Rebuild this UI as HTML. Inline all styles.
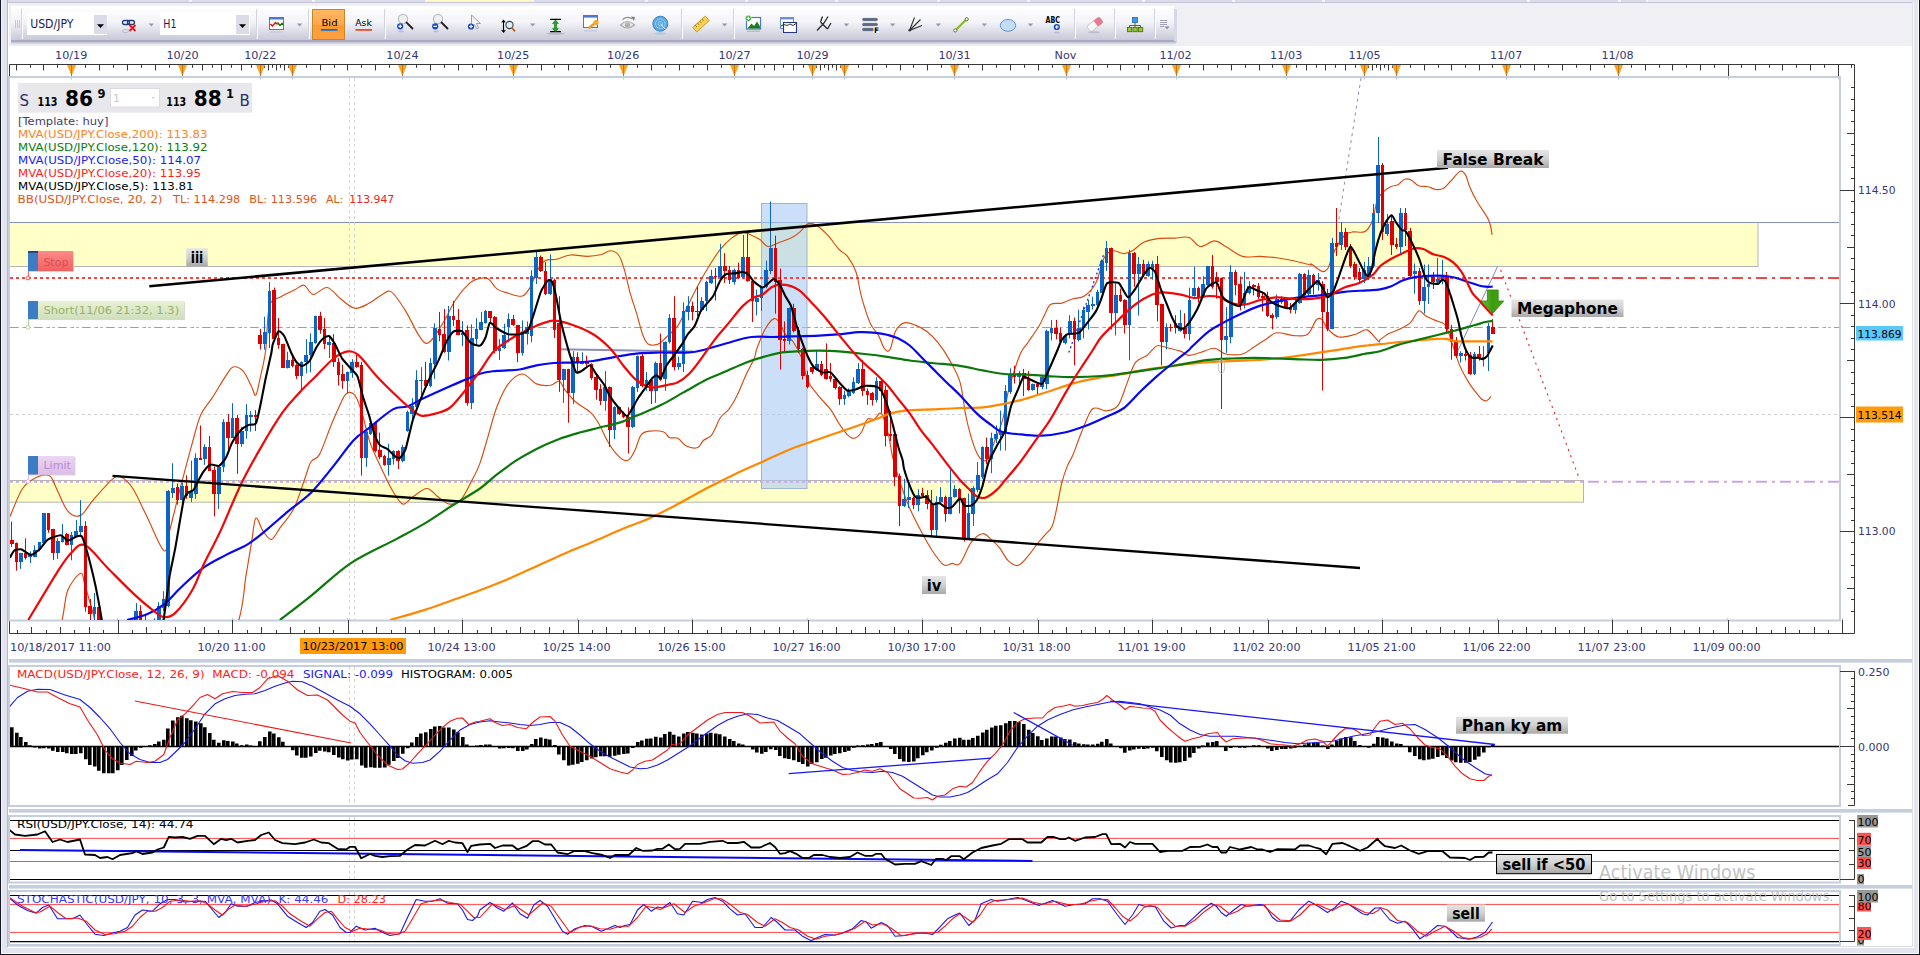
<!DOCTYPE html>
<html><head><meta charset="utf-8"><title>USD/JPY H1</title>
<style>
html,body{margin:0;padding:0;background:#fff;overflow:hidden}
body{width:1920px;height:955px;position:relative;font-family:'DejaVu Sans','Liberation Sans',sans-serif}
svg{position:absolute;left:0;top:0;display:block}
text{font-family:'DejaVu Sans','Liberation Sans',sans-serif}
.ax{font-size:11px;fill:#36367a}
.lb{font-family:'DejaVu Sans','Liberation Sans',sans-serif;font-weight:bold;fill:#000}
</style></head><body>
<svg width="1920" height="955" viewBox="0 0 1920 955">
<defs>
<linearGradient id="tb" x1="0" y1="0" x2="0" y2="1"><stop offset="0" stop-color="#ffffff"/><stop offset="0.45" stop-color="#f4f4f9"/><stop offset="1" stop-color="#c6c6d6"/></linearGradient>
<linearGradient id="bid" x1="0" y1="0" x2="0" y2="1"><stop offset="0" stop-color="#ffb864"/><stop offset="0.5" stop-color="#ffa848"/><stop offset="0.51" stop-color="#ff9a32"/><stop offset="1" stop-color="#ffa040"/></linearGradient>
<linearGradient id="lbl" x1="0" y1="0" x2="0" y2="1"><stop offset="0" stop-color="#e6e6e6"/><stop offset="0.5" stop-color="#d0d0d0"/><stop offset="1" stop-color="#a8a8a8"/></linearGradient>
<linearGradient id="shadow" x1="0" y1="0" x2="0" y2="1"><stop offset="0" stop-color="#9c9cb4"/><stop offset="1" stop-color="#efeff4" stop-opacity="0"/></linearGradient>
<linearGradient id="garrow" x1="0" y1="0" x2="1" y2="0"><stop offset="0" stop-color="#6cc02c"/><stop offset="0.5" stop-color="#3c9a10"/><stop offset="1" stop-color="#4aa818"/></linearGradient>
<clipPath id="cm"><rect x="10" y="78" width="1829" height="542"/></clipPath>
<clipPath id="cmacd"><rect x="10" y="667" width="1829" height="139"/></clipPath>
<clipPath id="crsi"><rect x="10" y="817" width="1829" height="65"/></clipPath>
<clipPath id="csto"><rect x="10" y="892" width="1829" height="52"/></clipPath>
</defs><rect x="0" y="0" width="1920" height="955" fill="#e4e4ee"/><rect x="8" y="3" width="1904" height="43" fill="#efeff4"/><rect x="8" y="46" width="1904" height="900" fill="#ffffff"/><rect x="8" y="0" width="1904" height="2" fill="#dcdce8"/><rect x="8" y="2" width="1904" height="1" fill="#c4c4d8"/><rect x="427" y="0" width="104" height="2" fill="#fff6c0"/><rect x="189" y="0" width="3" height="2" fill="#f4f4fa"/><rect x="312" y="0" width="3" height="2" fill="#f4f4fa"/><rect x="425" y="0" width="3" height="2" fill="#f4f4fa"/><rect x="531" y="0" width="3" height="2" fill="#f4f4fa"/><rect x="645" y="0" width="3" height="2" fill="#f4f4fa"/><rect x="745" y="0" width="3" height="2" fill="#f4f4fa"/><rect x="835" y="0" width="3" height="2" fill="#f4f4fa"/><rect x="937" y="0" width="3" height="2" fill="#f4f4fa"/><rect x="1027" y="0" width="3" height="2" fill="#f4f4fa"/><rect x="1142" y="0" width="3" height="2" fill="#f4f4fa"/><rect x="1232" y="0" width="3" height="2" fill="#f4f4fa"/><rect x="1322" y="0" width="3" height="2" fill="#f4f4fa"/><rect x="1527" y="0" width="3" height="2" fill="#f4f4fa"/><rect x="1618" y="0" width="3" height="2" fill="#f4f4fa"/><rect x="1646" y="0" width="3" height="2" fill="#f4f4fa"/><rect x="1648" y="0" width="264" height="2" fill="#e8e8f2"/><rect x="0" y="0" width="1" height="955" fill="#14182a"/><rect x="1" y="0" width="1" height="955" fill="#f4f4fa"/><rect x="7" y="0" width="1" height="947" fill="#b8b8cc"/><rect x="8" y="3" width="1" height="943" fill="#ffffff"/><rect x="1912" y="3" width="1" height="944" fill="#dcdcea"/><rect x="1913" y="3" width="1" height="945" fill="#ffffff"/><rect x="1918" y="0" width="1" height="954" fill="#ffffff"/><rect x="1919" y="0" width="1" height="955" fill="#14182a"/><rect x="8" y="946" width="1905" height="1" fill="#dcdcea"/><rect x="8" y="947" width="1906" height="1" fill="#ffffff"/><rect x="1" y="953" width="1918" height="1" fill="#ffffff"/><rect x="0" y="954" width="1920" height="1" fill="#14182a"/><rect x="11" y="41" width="1165" height="5" fill="url(#shadow)"/><rect x="1174" y="9" width="3" height="34" fill="#c8c8d8" opacity="0.6"/><rect x="11" y="6" width="1163" height="35" fill="url(#tb)"/><rect x="11" y="40" width="1163" height="1" fill="#a8a8c0"/><line x1="15.5" y1="20" x2="15.5" y2="28" stroke="#c4c4d6" stroke-width="1"/><line x1="17.5" y1="20" x2="17.5" y2="28" stroke="#c4c4d6" stroke-width="1"/><line x1="19.5" y1="20" x2="19.5" y2="28" stroke="#c4c4d6" stroke-width="1"/><rect x="21" y="9" width="1" height="30" fill="#d2d2e0"/><rect x="22" y="9" width="1" height="30" fill="#fafaff"/><rect x="256" y="9" width="1" height="30" fill="#d2d2e0"/><rect x="257" y="9" width="1" height="30" fill="#fafaff"/><rect x="308" y="9" width="1" height="30" fill="#d2d2e0"/><rect x="309" y="9" width="1" height="30" fill="#fafaff"/><rect x="384" y="9" width="1" height="30" fill="#d2d2e0"/><rect x="385" y="9" width="1" height="30" fill="#fafaff"/><rect x="681" y="9" width="1" height="30" fill="#d2d2e0"/><rect x="682" y="9" width="1" height="30" fill="#fafaff"/><rect x="733" y="9" width="1" height="30" fill="#d2d2e0"/><rect x="734" y="9" width="1" height="30" fill="#fafaff"/><rect x="1074" y="9" width="1" height="30" fill="#d2d2e0"/><rect x="1075" y="9" width="1" height="30" fill="#fafaff"/><rect x="1114" y="9" width="1" height="30" fill="#d2d2e0"/><rect x="1115" y="9" width="1" height="30" fill="#fafaff"/><rect x="1154" y="9" width="1" height="30" fill="#d2d2e0"/><rect x="1155" y="9" width="1" height="30" fill="#fafaff"/><path d="M148.6,23.5 h5.4 l-2.7,3 z" fill="#9898b0"/><path d="M296.9,23.5 h5.4 l-2.7,3 z" fill="#9898b0"/><path d="M530,23.5 h5.4 l-2.7,3 z" fill="#9898b0"/><path d="M721.9,23.5 h5.4 l-2.7,3 z" fill="#9898b0"/><path d="M843.75,23.5 h5.4 l-2.7,3 z" fill="#9898b0"/><path d="M890,23.5 h5.4 l-2.7,3 z" fill="#9898b0"/><path d="M935.6,23.5 h5.4 l-2.7,3 z" fill="#9898b0"/><path d="M981.7,23.5 h5.4 l-2.7,3 z" fill="#9898b0"/><path d="M1027.8,23.5 h5.4 l-2.7,3 z" fill="#9898b0"/><rect x="27" y="12" width="80" height="23" fill="#ffffff"/><rect x="94" y="15" width="13" height="19" fill="#dcdce8"/><path d="M97,24.3 h7 l-3.5,3.8 z" fill="#000"/><text x="30.2" y="27.9" font-size="11.9px" fill="#1a1a50" font-family="'Liberation Sans',sans-serif" textLength="43.2" lengthAdjust="spacingAndGlyphs">USD/JPY</text><g fill="none" stroke="#1c3c78" stroke-width="1.3"><rect x="122.5" y="20.5" width="7" height="4" rx="2"/><rect x="127.5" y="20.5" width="7" height="4" rx="2"/></g><path d="M129.5,25 l6,6 M135.5,25 l-6,6" stroke="#e81010" stroke-width="1.8"/><g fill="none" stroke="#b0b4c8" stroke-width="1" opacity="0.7"><rect x="122.5" y="29.5" width="6" height="3" rx="1.5"/></g><rect x="160" y="12" width="90" height="23" fill="#ffffff"/><rect x="236" y="15" width="13" height="19" fill="#dcdce8"/><path d="M239,24.3 h7 l-3.5,3.8 z" fill="#000"/><text x="163.3" y="27.9" font-size="11.9px" fill="#1a1a50" font-family="'Liberation Sans',sans-serif" textLength="13.2" lengthAdjust="spacingAndGlyphs">H1</text><rect x="269.5" y="17.5" width="14" height="12" fill="#fff" stroke="#4a78d0" stroke-width="1"/><rect x="269" y="17" width="15" height="2.5" fill="#4a78d0"/><path d="M270.5,24 l2,2 l3,-3.5 l2,2" fill="none" stroke="#e01010" stroke-width="1.5"/><path d="M277.5,22.5 l2.5,3 l2,-2 l1,1.5" fill="none" stroke="#107010" stroke-width="1.5"/><rect x="270" y="31" width="13" height="2" fill="#c8c8d8" opacity="0.7"/><rect x="312.5" y="9.5" width="32" height="30" fill="url(#bid)" stroke="#c08828" stroke-width="1"/><text x="321.5" y="25.8" font-size="9.5px" fill="#000" font-family="'DejaVu Sans Mono','Liberation Mono',monospace" textLength="16" lengthAdjust="spacingAndGlyphs">Bid</text><rect x="321" y="29" width="16.5" height="1.8" fill="#1070e0"/><text x="355.3" y="25.8" font-size="9.5px" fill="#000" font-family="'DejaVu Sans Mono','Liberation Mono',monospace" textLength="16.5" lengthAdjust="spacingAndGlyphs">Ask</text><rect x="355.5" y="29" width="16.5" height="1.8" fill="#f04820"/><circle cx="403" cy="19" r="4.6" fill="#eef0f4" stroke="#b8bcc4" stroke-width="1.2"/><path d="M406.5,22.5 l6,6" stroke="#202020" stroke-width="1.8" stroke-linecap="round"/><circle cx="400.2" cy="26.3" r="3.1" fill="#1848c0"/><path d="M398.4,26.3 h3.6" stroke="#fff" stroke-width="1.2"/><path d="M400.2,24.5 v3.6" stroke="#fff" stroke-width="1.2"/><ellipse cx="401" cy="31.5" rx="3" ry="1" fill="#a0a8d8" opacity="0.6"/><circle cx="438" cy="19" r="4.6" fill="#eef0f4" stroke="#b8bcc4" stroke-width="1.2"/><path d="M441.5,22.5 l6,6" stroke="#202020" stroke-width="1.8" stroke-linecap="round"/><circle cx="435.2" cy="26.3" r="3.1" fill="#1848c0"/><path d="M433.4,26.3 h3.6" stroke="#fff" stroke-width="1.2"/><ellipse cx="436" cy="31.5" rx="3" ry="1" fill="#a0a8d8" opacity="0.6"/><path d="M471.5,15 l0,12 l3,-2.5 l2,4.5 l2,-1 l-2,-4.5 l4,0 z" fill="#f4f4f4" stroke="#a0a0a8" stroke-width="1"/><circle cx="471" cy="26.5" r="3.1" fill="#1848c0"/><path d="M469.2,26.5 h3.6 M471,24.7 v3.6" stroke="#fff" stroke-width="1.2"/><path d="M503.5,20.5 v11.5 M501.7,22.5 l1.8,-2.2 l1.8,2.2 M501.7,30 l1.8,2.2 l1.8,-2.2" stroke="#000" stroke-width="1.1" fill="none"/><circle cx="509.5" cy="25" r="3.6" fill="#d8f0fa" stroke="#404040" stroke-width="1.1"/><path d="M512,28 l3,3.3" stroke="#c06010" stroke-width="1.8"/><path d="M550,19.3 h11 M550,31.7 h11" stroke="#000" stroke-width="1.3"/><path d="M555.5,20 l-3,3.6 h2 v4.8 h-2 l3,3.6 l3,-3.6 h-2 v-4.8 h2 z" fill="#28a028" stroke="#107010" stroke-width="0.6"/><ellipse cx="555.5" cy="33.5" rx="9" ry="1.2" fill="#9090a0" opacity="0.5"/><rect x="583.5" y="15.5" width="14" height="12" fill="#fff" stroke="#4a78d0" stroke-width="1"/><rect x="583" y="15" width="15" height="2.6" fill="#4a78d0"/><path d="M589.5,27.5 l5,-4" stroke="#f09820" stroke-width="2.6" stroke-linecap="round"/><circle cx="596" cy="22.5" r="2.6" fill="#f8a828"/><rect x="584" y="30" width="13" height="1.5" fill="#a8b8e0" opacity="0.5"/><path d="M620.5,25 q7,-7 14,0 q-7,6 -14,0 z" fill="#e8e8e8" stroke="#a8a8a8" stroke-width="1.1"/><circle cx="627.5" cy="25" r="2.6" fill="#b0b0b0"/><path d="M622.5,19.5 q5,-4 10,-0.5" fill="none" stroke="#909090" stroke-width="1.2"/><path d="M631,16.5 l4,0.5 l-1,4 z" fill="#808080"/><circle cx="660.3" cy="23.7" r="7.5" fill="#58a8e0" stroke="#3888c8" stroke-width="1"/><circle cx="660.3" cy="23.7" r="4.8" fill="none" stroke="#a8d4f4" stroke-width="0.8"/><circle cx="660.3" cy="23.7" r="2.2" fill="none" stroke="#a8d4f4" stroke-width="0.8"/><path d="M660.3,23.7 l5,5.5" stroke="#d8ecfc" stroke-width="1"/><ellipse cx="660.3" cy="33.5" rx="6" ry="1.2" fill="#88b8e0" opacity="0.5"/><g transform="translate(701,24) rotate(-42)"><rect x="-8.5" y="-3" width="17" height="6" fill="#f8d058" stroke="#c89820" stroke-width="0.9"/><path d="M-5,-3 v2.5 M-2,-3 v2.5 M1,-3 v2.5 M4,-3 v2.5" stroke="#806010" stroke-width="0.7"/></g><rect x="746.5" y="17.5" width="14" height="11.5" fill="#fff" stroke="#4a78d0" stroke-width="1.2"/><path d="M747.5,28.5 l4,-5 l2.5,2.5 l3,-4.5 l3,5 v2 z" fill="#1c7c1c"/><circle cx="748.3" cy="18.3" r="3.1" fill="#38a838" stroke="#fff" stroke-width="0.6"/><path d="M746.5,18.3 h3.6 M748.3,16.5 v3.6" stroke="#fff" stroke-width="1.1"/><rect x="747" y="30.5" width="13" height="1.5" fill="#80b080" opacity="0.5"/><rect x="780.5" y="17.5" width="13" height="11" fill="#fff" stroke="#6890d8" stroke-width="1"/><rect x="780" y="17" width="14" height="2.4" fill="#6890d8"/><rect x="783.5" y="22.5" width="13" height="10" fill="#fff" stroke="#283878" stroke-width="1.1"/><path d="M781,26 l3,-1.5 l3,1 l3,-1.5 l3,1.5 l3,-2" fill="none" stroke="#202020" stroke-width="0.9"/><path d="M817,30.5 l7,-7.5 M820.5,22 l7,7 M822.5,16.5 l-2,5.5 M824,23 l4,-6.5 M827.5,29 l3.5,-6" stroke="#282828" stroke-width="1.3" fill="none"/><rect x="862.5" y="18.3" width="15" height="2.4" rx="1.2" fill="#5c6880" stroke="#384258" stroke-width="0.4"/><rect x="862.5" y="23.3" width="15" height="2.4" rx="1.2" fill="#5c6880" stroke="#384258" stroke-width="0.4"/><rect x="862.5" y="28.3" width="15" height="2.4" rx="1.2" fill="#5c6880" stroke="#384258" stroke-width="0.4"/><rect x="873.5" y="26.5" width="5.5" height="6.5" fill="#fff"/><text x="874" y="32.6" font-size="7.5px" font-weight="bold" fill="#000" font-family="'Liberation Sans',sans-serif">F</text><path d="M909.5,30.5 l5,-13 M909.5,30.5 l11,-11 M909.5,30.5 l12.5,-5" stroke="#303030" stroke-width="1.1" fill="none"/><circle cx="909.7" cy="30.3" r="1.3" fill="#303030"/><path d="M955.5,30.3 l11,-11" stroke="#88b828" stroke-width="2.2"/><circle cx="955.3" cy="30.4" r="1.6" fill="#fff" stroke="#507010" stroke-width="0.9"/><circle cx="966.7" cy="19.2" r="1.6" fill="#fff" stroke="#507010" stroke-width="0.9"/><ellipse cx="1008" cy="25.4" rx="7.7" ry="5.9" fill="#c4dcf4" stroke="#6494d4" stroke-width="1"/><text x="1045.5" y="23" font-size="8.3px" font-weight="bold" fill="#000" font-family="'DejaVu Sans Mono','Liberation Mono',monospace" textLength="14.5" lengthAdjust="spacingAndGlyphs">ABC</text><circle cx="1056.8" cy="27" r="3.1" fill="#1848c0"/><path d="M1055,27 h3.6 M1056.8,25.2 v3.6" stroke="#fff" stroke-width="1.2"/><ellipse cx="1056.8" cy="32.5" rx="3" ry="1" fill="#a0a8d8" opacity="0.6"/><g transform="translate(1095,24.3) rotate(-38)"><rect x="-8" y="-3.6" width="16" height="7.2" rx="2" fill="#f8f8f8" stroke="#c0c0c8" stroke-width="0.8"/><path d="M1,-3.6 h5 a2,2 0 0 1 2,2 v3.2 a2,2 0 0 1 -2,2 h-5 z" fill="#ec7890"/></g><ellipse cx="1094" cy="32.3" rx="6" ry="1" fill="#a0a0b0" opacity="0.5"/><rect x="1132.5" y="17.5" width="5" height="5" fill="#3898f0" stroke="#1868c0" stroke-width="0.8"/><path d="M1135,22.5 v3 M1129.5,28 v-2.5 h11 v2.5 M1135,25.5 v2.5" stroke="#507010" stroke-width="1" fill="none"/><rect x="1127.5" y="27.5" width="4.2" height="4.2" fill="#98c838" stroke="#507010" stroke-width="0.9"/><rect x="1133" y="27.5" width="4.2" height="4.2" fill="#98c838" stroke="#507010" stroke-width="0.9"/><rect x="1138.5" y="27.5" width="4.2" height="4.2" fill="#98c838" stroke="#507010" stroke-width="0.9"/><path d="M1160,20.5 h7 M1160,22.5 h7 M1160,24.5 h7 M1160,26.5 h4" stroke="#9898b0" stroke-width="0.9"/><path d="M1164.5,26.5 h5 l-2.5,2.8 z" fill="#8888a0"/><path d="M9.5,77 V64.5 H1854.5 V633.5 H9.5 V620" fill="none" stroke="#383838" stroke-width="1"/><path d="M57.5,64.5V67.8M43.5,64.5V70.5M30.5,64.5V67.8M16.5,64.5V70.5M85.5,64.5V67.8M99.5,64.5V70.5M113.5,64.5V67.8M127.5,64.5V70.5M141.5,64.5V67.8M155.5,64.5V70.5M169.5,64.5V67.8M192.5,64.5V67.8M202.5,64.5V70.5M212.5,64.5V67.8M221.5,64.5V70.5M231.5,64.5V67.8M241.5,64.5V70.5M251.5,64.5V67.8M264.5,64.5V67.8M268.5,64.5V70.5M272.5,64.5V67.8M276.5,64.5V70.5M280.5,64.5V67.8M284.5,64.5V70.5M288.5,64.5V67.8M306.5,64.5V67.8M320.5,64.5V70.5M334.5,64.5V67.8M347.5,64.5V70.5M361.5,64.5V67.8M375.5,64.5V70.5M389.5,64.5V67.8M416.5,64.5V67.8M430.5,64.5V70.5M444.5,64.5V67.8M458.5,64.5V70.5M472.5,64.5V67.8M486.5,64.5V70.5M499.5,64.5V67.8M527.5,64.5V67.8M541.5,64.5V70.5M554.5,64.5V67.8M568.5,64.5V70.5M582.5,64.5V67.8M596.5,64.5V70.5M610.5,64.5V67.8M637.5,64.5V67.8M651.5,64.5V70.5M665.5,64.5V67.8M679.5,64.5V70.5M693.5,64.5V67.8M707.5,64.5V70.5M721.5,64.5V67.8M744.5,64.5V67.8M754.5,64.5V70.5M764.5,64.5V67.8M774.5,64.5V70.5M783.5,64.5V67.8M793.5,64.5V70.5M803.5,64.5V67.8M816.5,64.5V67.8M820.5,64.5V70.5M824.5,64.5V67.8M828.5,64.5V70.5M832.5,64.5V67.8M836.5,64.5V70.5M840.5,64.5V67.8M858.5,64.5V67.8M872.5,64.5V70.5M886.5,64.5V67.8M900.5,64.5V70.5M913.5,64.5V67.8M927.5,64.5V70.5M941.5,64.5V67.8M968.5,64.5V67.8M982.5,64.5V70.5M996.5,64.5V67.8M1010.5,64.5V70.5M1024.5,64.5V67.8M1038.5,64.5V70.5M1052.5,64.5V67.8M1079.5,64.5V67.8M1093.5,64.5V70.5M1107.5,64.5V67.8M1120.5,64.5V70.5M1134.5,64.5V67.8M1148.5,64.5V70.5M1162.5,64.5V67.8M1189.5,64.5V67.8M1203.5,64.5V70.5M1217.5,64.5V67.8M1231.5,64.5V70.5M1245.5,64.5V67.8M1259.5,64.5V70.5M1272.5,64.5V67.8M1296.5,64.5V67.8M1306.5,64.5V70.5M1316.5,64.5V67.8M1325.5,64.5V70.5M1335.5,64.5V67.8M1345.5,64.5V70.5M1355.5,64.5V67.8M1368.5,64.5V67.8M1372.5,64.5V70.5M1376.5,64.5V67.8M1380.5,64.5V70.5M1384.5,64.5V67.8M1388.5,64.5V70.5M1392.5,64.5V67.8M1410.5,64.5V67.8M1424.5,64.5V70.5M1438.5,64.5V67.8M1451.5,64.5V70.5M1465.5,64.5V67.8M1479.5,64.5V70.5M1492.5,64.5V67.8M1520.5,64.5V67.8M1534.5,64.5V70.5M1548.5,64.5V67.8M1562.5,64.5V70.5M1576.5,64.5V67.8M1590.5,64.5V70.5M1604.5,64.5V67.8M1631.5,64.5V67.8M1645.5,64.5V70.5M1659.5,64.5V67.8M1672.5,64.5V70.5M1686.5,64.5V67.8M1700.5,64.5V70.5M1714.5,64.5V67.8M1741.5,64.5V67.8M1755.5,64.5V70.5M1769.5,64.5V67.8M1782.5,64.5V70.5M1796.5,64.5V67.8M1810.5,64.5V70.5M1824.5,64.5V67.8M1851.5,64.5V67.8M71.5,64.5V77M182.5,64.5V77M260.5,64.5V77M292.5,64.5V77M402.5,64.5V77M513.5,64.5V77M623.5,64.5V77M734.5,64.5V77M812.5,64.5V77M844.5,64.5V77M954.5,64.5V77M1066.5,64.5V77M1176.5,64.5V77M1286.5,64.5V77M1364.5,64.5V77M1396.5,64.5V77M1506.5,64.5V77M1618.5,64.5V77M1728.5,64.5V77M1838.5,64.5V77" stroke="#383838" stroke-width="1" fill="none"/><path d="M67.0,65 h9 l-4.5,11 z" fill="#ffa318"/><path d="M71.5,65V77" stroke="#c87808" stroke-width="1"/><path d="M178.0,65 h9 l-4.5,11 z" fill="#ffa318"/><path d="M182.5,65V77" stroke="#c87808" stroke-width="1"/><path d="M256.0,65 h9 l-4.5,11 z" fill="#ffa318"/><path d="M260.5,65V77" stroke="#c87808" stroke-width="1"/><path d="M288.0,65 h9 l-4.5,11 z" fill="#ffa318"/><path d="M292.5,65V77" stroke="#c87808" stroke-width="1"/><path d="M398.0,65 h9 l-4.5,11 z" fill="#ffa318"/><path d="M402.5,65V77" stroke="#c87808" stroke-width="1"/><path d="M509.0,65 h9 l-4.5,11 z" fill="#ffa318"/><path d="M513.5,65V77" stroke="#c87808" stroke-width="1"/><path d="M619.0,65 h9 l-4.5,11 z" fill="#ffa318"/><path d="M623.5,65V77" stroke="#c87808" stroke-width="1"/><path d="M730.0,65 h9 l-4.5,11 z" fill="#ffa318"/><path d="M734.5,65V77" stroke="#c87808" stroke-width="1"/><path d="M808.0,65 h9 l-4.5,11 z" fill="#ffa318"/><path d="M812.5,65V77" stroke="#c87808" stroke-width="1"/><path d="M840.0,65 h9 l-4.5,11 z" fill="#ffa318"/><path d="M844.5,65V77" stroke="#c87808" stroke-width="1"/><path d="M950.0,65 h9 l-4.5,11 z" fill="#ffa318"/><path d="M954.5,65V77" stroke="#c87808" stroke-width="1"/><path d="M1062.0,65 h9 l-4.5,11 z" fill="#ffa318"/><path d="M1066.5,65V77" stroke="#c87808" stroke-width="1"/><path d="M1172.0,65 h9 l-4.5,11 z" fill="#ffa318"/><path d="M1176.5,65V77" stroke="#c87808" stroke-width="1"/><path d="M1282.0,65 h9 l-4.5,11 z" fill="#ffa318"/><path d="M1286.5,65V77" stroke="#c87808" stroke-width="1"/><path d="M1360.0,65 h9 l-4.5,11 z" fill="#ffa318"/><path d="M1364.5,65V77" stroke="#c87808" stroke-width="1"/><path d="M1392.0,65 h9 l-4.5,11 z" fill="#ffa318"/><path d="M1396.5,65V77" stroke="#c87808" stroke-width="1"/><path d="M1502.0,65 h9 l-4.5,11 z" fill="#ffa318"/><path d="M1506.5,65V77" stroke="#c87808" stroke-width="1"/><path d="M1614.0,65 h9 l-4.5,11 z" fill="#ffa318"/><path d="M1618.5,65V77" stroke="#c87808" stroke-width="1"/><text x="71.2" y="59" text-anchor="middle" font-size="11.2px" fill="#36367a">10/19</text><text x="182.5" y="59" text-anchor="middle" font-size="11.2px" fill="#36367a">10/20</text><text x="260.3" y="59" text-anchor="middle" font-size="11.2px" fill="#36367a">10/22</text><text x="402.4" y="59" text-anchor="middle" font-size="11.2px" fill="#36367a">10/24</text><text x="513.2" y="59" text-anchor="middle" font-size="11.2px" fill="#36367a">10/25</text><text x="623.2" y="59" text-anchor="middle" font-size="11.2px" fill="#36367a">10/26</text><text x="734.5" y="59" text-anchor="middle" font-size="11.2px" fill="#36367a">10/27</text><text x="812.5" y="59" text-anchor="middle" font-size="11.2px" fill="#36367a">10/29</text><text x="954.5" y="59" text-anchor="middle" font-size="11.2px" fill="#36367a">10/31</text><text x="1065.5" y="59" text-anchor="middle" font-size="11.2px" fill="#36367a">Nov</text><text x="1175.5" y="59" text-anchor="middle" font-size="11.2px" fill="#36367a">11/02</text><text x="1286.2" y="59" text-anchor="middle" font-size="11.2px" fill="#36367a">11/03</text><text x="1364.5" y="59" text-anchor="middle" font-size="11.2px" fill="#36367a">11/05</text><text x="1506.2" y="59" text-anchor="middle" font-size="11.2px" fill="#36367a">11/07</text><text x="1617.5" y="59" text-anchor="middle" font-size="11.2px" fill="#36367a">11/08</text><rect x="9" y="77" width="1831" height="543.5" fill="#fff" stroke="#c4cedc" stroke-width="2"/><rect x="9" y="666" width="1831" height="140" fill="#fff" stroke="#c4cedc" stroke-width="2"/><rect x="9" y="816" width="1831" height="66.5" fill="#fff" stroke="#c4cedc" stroke-width="2"/><rect x="9" y="891" width="1831" height="54" fill="#fff" stroke="#c4cedc" stroke-width="2"/><rect x="9" y="659" width="1903" height="3.6" fill="#c4cedc"/><rect x="9" y="809" width="1903" height="3.6" fill="#c4cedc"/><rect x="9" y="885" width="1903" height="3.6" fill="#c4cedc"/><path d="M117.5,620V618 M232.5,620V618 M347.5,620V618 M462.5,620V618 M577.5,620V618 M692.5,620V618 M807.5,620V618 M922.5,620V618 M1037.5,620V618 M1152.5,620V618 M1267.5,620V618 M1382.5,620V618 M1497.5,620V618 M1612.5,620V618 M1727.5,620V618 M1842.5,620V618 M71.5,77V79.5 M182.5,77V79.5 M260.5,77V79.5 M292.5,77V79.5 M402.5,77V79.5 M513.5,77V79.5 M623.5,77V79.5 M734.5,77V79.5 M812.5,77V79.5 M844.5,77V79.5 M954.5,77V79.5 M1066.5,77V79.5 M1176.5,77V79.5 M1286.5,77V79.5 M1364.5,77V79.5 M1396.5,77V79.5 M1506.5,77V79.5 M1618.5,77V79.5 M1728.5,77V79.5 M1838.5,77V79.5 " stroke="#b8c8e0" stroke-width="1"/><path d="M17.5,633V630M31.5,633V627M46.5,633V630M60.5,633V627M74.5,633V630M89.5,633V627M103.5,633V630M118.5,633V620M132.5,633V630M146.5,633V627M161.5,633V630M175.5,633V627M189.5,633V630M204.5,633V627M218.5,633V630M232.5,633V620M247.5,633V630M261.5,633V627M276.5,633V630M290.5,633V627M304.5,633V630M319.5,633V627M333.5,633V630M348.5,633V620M362.5,633V630M376.5,633V627M391.5,633V630M405.5,633V627M419.5,633V630M434.5,633V627M448.5,633V630M462.5,633V620M477.5,633V630M491.5,633V627M506.5,633V630M520.5,633V627M534.5,633V630M549.5,633V627M563.5,633V630M578.5,633V620M592.5,633V630M606.5,633V627M621.5,633V630M635.5,633V627M649.5,633V630M664.5,633V627M678.5,633V630M692.5,633V620M707.5,633V630M721.5,633V627M736.5,633V630M750.5,633V627M764.5,633V630M779.5,633V627M793.5,633V630M808.5,633V620M822.5,633V630M836.5,633V627M851.5,633V630M865.5,633V627M879.5,633V630M894.5,633V627M908.5,633V630M922.5,633V620M937.5,633V630M951.5,633V627M966.5,633V630M980.5,633V627M994.5,633V630M1009.5,633V627M1023.5,633V630M1038.5,633V620M1052.5,633V630M1066.5,633V627M1081.5,633V630M1095.5,633V627M1109.5,633V630M1124.5,633V627M1138.5,633V630M1152.5,633V620M1167.5,633V630M1181.5,633V627M1196.5,633V630M1210.5,633V627M1224.5,633V630M1239.5,633V627M1253.5,633V630M1268.5,633V620M1282.5,633V630M1296.5,633V627M1311.5,633V630M1325.5,633V627M1339.5,633V630M1354.5,633V627M1368.5,633V630M1382.5,633V620M1397.5,633V630M1411.5,633V627M1426.5,633V630M1440.5,633V627M1454.5,633V630M1469.5,633V627M1483.5,633V630M1498.5,633V620M1512.5,633V630M1526.5,633V627M1541.5,633V630M1555.5,633V627M1569.5,633V630M1584.5,633V627M1598.5,633V630M1612.5,633V620M1627.5,633V630M1641.5,633V627M1656.5,633V630M1670.5,633V627M1684.5,633V630M1699.5,633V627M1713.5,633V630M1728.5,633V620M1742.5,633V630M1756.5,633V627M1771.5,633V630M1785.5,633V627M1799.5,633V630M1814.5,633V627M1828.5,633V630M1842.5,633V620" stroke="#383838" stroke-width="1" fill="none"/><text x="10" y="650.8" class="ax" textLength="101" lengthAdjust="spacingAndGlyphs">10/18/2017 11:00</text><text x="231.5" y="650.8" class="ax" text-anchor="middle" textLength="68" lengthAdjust="spacingAndGlyphs">10/20 11:00</text><text x="461.5" y="650.8" class="ax" text-anchor="middle" textLength="68" lengthAdjust="spacingAndGlyphs">10/24 13:00</text><text x="576.5" y="650.8" class="ax" text-anchor="middle" textLength="68" lengthAdjust="spacingAndGlyphs">10/25 14:00</text><text x="691.5" y="650.8" class="ax" text-anchor="middle" textLength="68" lengthAdjust="spacingAndGlyphs">10/26 15:00</text><text x="806.5" y="650.8" class="ax" text-anchor="middle" textLength="68" lengthAdjust="spacingAndGlyphs">10/27 16:00</text><text x="921.5" y="650.8" class="ax" text-anchor="middle" textLength="68" lengthAdjust="spacingAndGlyphs">10/30 17:00</text><text x="1036.5" y="650.8" class="ax" text-anchor="middle" textLength="68" lengthAdjust="spacingAndGlyphs">10/31 18:00</text><text x="1151.5" y="650.8" class="ax" text-anchor="middle" textLength="68" lengthAdjust="spacingAndGlyphs">11/01 19:00</text><text x="1266.5" y="650.8" class="ax" text-anchor="middle" textLength="68" lengthAdjust="spacingAndGlyphs">11/02 20:00</text><text x="1381.5" y="650.8" class="ax" text-anchor="middle" textLength="68" lengthAdjust="spacingAndGlyphs">11/05 21:00</text><text x="1496.5" y="650.8" class="ax" text-anchor="middle" textLength="68" lengthAdjust="spacingAndGlyphs">11/06 22:00</text><text x="1611.5" y="650.8" class="ax" text-anchor="middle" textLength="68" lengthAdjust="spacingAndGlyphs">11/07 23:00</text><text x="1726.5" y="650.8" class="ax" text-anchor="middle" textLength="68" lengthAdjust="spacingAndGlyphs">11/09 00:00</text><rect x="300" y="638" width="106" height="16" fill="#ff9a0c"/><text x="353" y="650.3" text-anchor="middle" font-size="11px" fill="#000" textLength="101" lengthAdjust="spacingAndGlyphs">10/23/2017 13:00</text><path d="M1854,611.5H1851M1854,599.5H1851M1854,588.5H1847M1854,577.5H1851M1854,565.5H1851M1854,554.5H1851M1854,542.5H1851M1854,531.5H1840M1854,520.5H1851M1854,508.5H1851M1854,497.5H1851M1854,485.5H1851M1854,474.5H1847M1854,463.5H1851M1854,451.5H1851M1854,440.5H1851M1854,429.5H1851M1854,417.5H1840M1854,406.5H1851M1854,394.5H1851M1854,383.5H1851M1854,372.5H1851M1854,360.5H1847M1854,349.5H1851M1854,338.5H1851M1854,326.5H1851M1854,315.5H1851M1854,303.5H1840M1854,292.5H1851M1854,281.5H1851M1854,269.5H1851M1854,258.5H1851M1854,247.5H1847M1854,235.5H1851M1854,224.5H1851M1854,212.5H1851M1854,201.5H1851M1854,190.5H1840M1854,178.5H1851M1854,167.5H1851M1854,155.5H1851M1854,144.5H1851M1854,133.5H1847M1854,121.5H1851M1854,110.5H1851M1854,99.5H1851M1854,87.5H1851" stroke="#383838" stroke-width="1" fill="none"/><text x="1858" y="193.8" class="ax" textLength="37.5" lengthAdjust="spacingAndGlyphs">114.50</text><text x="1858" y="307.6" class="ax" textLength="37.5" lengthAdjust="spacingAndGlyphs">114.00</text><text x="1858" y="535.2" class="ax" textLength="37.5" lengthAdjust="spacingAndGlyphs">113.00</text><rect x="1856" y="326" width="47" height="14.5" fill="#5ac8fa"/><text x="1857.5" y="337.5" font-size="11px" fill="#000" textLength="44" lengthAdjust="spacingAndGlyphs">113.869</text><rect x="1856" y="406.5" width="47" height="16" fill="#ff9a0c"/><text x="1857.5" y="418.7" font-size="11px" fill="#000" textLength="44" lengthAdjust="spacingAndGlyphs">113.514</text><g clip-path="url(#cm)"><rect x="9" y="222.5" width="1749" height="44" fill="#ffffc8" stroke="#b4b4b4" stroke-width="1"/><path d="M10,222.5H1839" stroke="#8890c0" stroke-width="1"/><rect x="9" y="480.5" width="1574.5" height="21.7" fill="#ffffc8" stroke="#b4b4b4" stroke-width="1"/><path d="M10,414.5H1839" stroke="#d0d0d0" stroke-width="1" stroke-dasharray="3,3"/><path d="M349.5,78V620M354.5,78V620" stroke="#d4d4d4" stroke-width="1" stroke-dasharray="3,3"/><path d="M10,327.5H1839" stroke="#a4c878" stroke-width="1" stroke-dasharray="3,3"/><path d="M10,327.5H1839" stroke="#68a8f4" stroke-width="1" stroke-dasharray="8,6,2,8" stroke-dashoffset="-24"/><rect x="761.5" y="203.5" width="45.5" height="285" fill="#a8ccf4" fill-opacity="0.6" stroke="#a4b4cc" stroke-width="1"/><path d="M10,278H1492" stroke="#f44444" stroke-width="2" stroke-dasharray="3,3"/><path d="M1492,278H1839" stroke="#f24848" stroke-width="2" stroke-dasharray="11,5,3,5"/><path d="M10,481.7H1492" stroke="#d0a8e4" stroke-width="2" stroke-dasharray="3,3"/><path d="M1492,481.7H1839" stroke="#cca4e2" stroke-width="2" stroke-dasharray="11,5,3,5"/><path d="M557.7,349.3L693,351.6" stroke="#8c90b8" stroke-width="2"/><path d="M1068.8,352.5L1104,253.6" stroke="#2828f0" stroke-width="1.3" stroke-dasharray="2,2.6"/><path d="M1361,78L1338.6,221" stroke="#8890b8" stroke-width="1" stroke-dasharray="3,4"/><path d="M1455.4,356L1497.8,266" stroke="#8088b8" stroke-width="1"/><path d="M1500.6,270L1579.5,479" stroke="#f01818" stroke-width="1.1" stroke-dasharray="2,4.6"/><path d="M9.9,516.8C12,512.1 18.1,495.1 22.6,488.5C27.1,481.9 32.3,479.3 36.7,477.2C41.2,475.1 46.2,473.9 49.5,475.8C52.8,477.7 53.5,482.6 56.5,488.5C59.6,494.4 63.8,506.7 67.8,511.1C71.8,515.6 76.3,517.3 80.6,515.4C84.8,513.5 87.9,505.9 93.3,499.8C98.7,493.7 108.4,482.4 113.1,478.6C117.8,474.9 118.3,475.6 121.6,477.2C124.9,478.9 128.6,481.9 132.9,488.5C137.1,495.1 141.8,506.4 147,516.8C152.2,527.1 160.2,548.4 164,550.7C167.7,553.1 166.8,541.8 169.6,530.9C172.4,520.1 177.1,500.3 180.9,485.7C184.7,471.1 188.9,455.1 192.2,443.3C195.5,431.5 197.4,422.6 200.7,415C204,407.5 207.8,404.7 212,398.1C216.3,391.5 222.6,380.6 226.1,375.4C229.7,370.3 230.4,367.7 233.2,367C236,366.3 240,367.9 243.1,371.2C246.2,374.5 249.5,382.7 251.6,386.7C253.7,390.8 254.4,396.6 255.8,395.2C257.2,393.8 258.4,385.8 260.1,378.3C261.7,370.7 264.2,362.1 265.7,350C267.3,337.9 266.9,314.8 269.5,306C272,297.1 276.8,299.4 281,296.7C285.2,294.1 291,291.7 294.8,289.8C298.7,287.9 301,284.5 304,285.2C307.1,286 309.4,294.1 313.2,294.4C317.1,294.8 322.5,286.8 327.1,287.5C331.7,288.3 336.3,295.6 340.9,299C345.5,302.5 350.1,307.5 354.7,308.3C359.3,309 363.9,306 368.5,303.6C373.1,301.3 378.5,296.4 382.3,294.4C386.2,292.5 387.7,289.4 391.6,292.1C395.4,294.8 400.8,303.3 405.4,310.6C410,317.9 415.4,330.5 419.2,335.9C423,341.3 424.6,344.7 428.4,342.8C432.3,340.9 437.6,331.7 442.2,324.4C446.8,317.1 451.4,306 456.1,299C460.7,292.1 465.9,286.4 469.9,282.9C473.9,279.5 476.9,279 480,278.3C483.1,277.7 485.7,277.3 488.5,279C491.3,280.8 493.7,286.6 497,288.9C500.3,291.3 504,292 508.3,293.2C512.5,294.4 518.6,297.2 522.4,296C526.2,294.8 528.5,290.1 530.9,286.1C533.2,282.1 534.2,276.2 536.5,272C538.9,267.7 541.7,262.8 545,260.7C548.3,258.6 552.1,260.2 556.3,259.3C560.6,258.3 565.3,255.5 570.5,255C575.6,254.5 582.2,256.5 587.4,256.4C592.6,256.3 597.8,255.4 601.6,254.5C605.3,253.5 607.2,250.7 610,250.8C612.9,250.9 616.2,252 618.5,255C620.9,258.1 622.3,263 624.2,269.2C626.1,275.3 627.7,284.2 629.8,291.8C631.9,299.3 634.8,307.3 636.9,314.4C639,321.4 640.7,329.2 642.5,334.2C644.4,339.1 645.6,342.4 648.2,344.1C650.8,345.7 655,345.2 658.1,344.1C661.2,342.9 663.3,340.1 666.6,337C669.9,333.9 674.6,330.4 677.9,325.7C681.2,321 683.1,315.3 686.4,308.7C689.7,302.1 693.9,293.2 697.7,286.1C701.4,279 705.2,272.4 709,266.3C712.7,260.2 716.5,254.1 720.3,249.4C724.1,244.7 727.8,240.9 731.6,238.1C735.4,235.2 739.6,232.9 742.9,232.4C746.2,231.9 748.6,234.1 751.4,235.2C754.2,236.4 757,237.6 759.9,239.5C762.7,241.4 765,246.1 768.3,246.5C771.6,247 775.9,243.7 779.6,242.3C783.4,240.9 787.7,239.7 791,238.1C794.3,236.4 796.6,234.8 799.4,232.4C802.3,230 805.1,225.1 807.9,223.9C810.7,222.7 813.1,223.5 816.4,225.3C819.7,227.2 823.9,231.2 827.7,235.2C831.5,239.2 835.7,245.8 839,249.4C842.3,252.9 844.7,252.7 847.5,256.4C850.3,260.2 853.6,265.1 856,272C858.3,278.8 859.3,288.9 861.6,297.4C864,305.9 867.3,316.5 870.1,322.9C872.9,329.2 876.2,331.3 878.6,335.6C880.9,339.8 882.4,345.9 884.2,348.3C886.1,350.7 888,352.5 889.9,349.7C891.8,346.9 893.2,335.8 895.5,331.3C897.9,326.9 900.7,323.9 904,322.9C907.3,321.8 911.6,323.7 915.3,325.1C919.1,326.5 922.9,328.4 926.6,331.3C930.4,334.3 934.2,337.9 938,342.7C941.7,347.4 945.6,353 949.3,359.6C952.9,366.2 957.3,373 960,382.2C962.7,391.5 963.8,405.8 965.7,415C967.5,424.3 969.4,431.3 971.3,437.6C973.2,444 975.1,449.4 977,453.2C978.8,456.9 980.7,459.3 982.6,460.2C984.5,461.2 986.4,461.7 988.3,458.8C990.2,456 991.6,449.6 993.9,443.3C996.3,436.9 1000,429.2 1002.4,420.7C1004.8,412.2 1006.2,400.4 1008.1,392.4C1009.9,384.4 1011.6,379.2 1013.7,372.6C1015.8,366 1018.4,357.8 1020.8,352.8C1023.1,347.8 1024.8,347.2 1027.8,342.7C1030.9,338.1 1036.3,330.4 1039.2,325.7C1042,321 1042.9,317.9 1044.8,314.4C1046.7,310.8 1047.6,306.4 1050.5,304.5C1053.3,302.6 1058,304 1061.8,303.1C1065.5,302.1 1069.3,300 1073.1,298.8C1076.8,297.7 1080.6,298.6 1084.4,296C1088.2,293.4 1092.4,289.6 1095.7,283.3C1099,276.9 1101.3,263.3 1104.2,257.8C1107,252.4 1109.4,251.5 1112.7,250.8C1115.9,250.1 1120.7,253.6 1124,253.6C1127.3,253.6 1129.1,252.7 1132.4,250.8C1135.7,248.9 1139.5,244.3 1143.7,242.3C1148,240.3 1152.7,239.3 1157.9,238.6C1163.1,237.9 1169.7,238.2 1174.8,238.1C1180,237.9 1184.7,236.1 1189,237.5C1193.2,238.9 1196,246 1200.3,246.5C1204.5,247.1 1210.2,240.9 1214.4,240.9C1218.7,240.9 1221,243.9 1225.7,246.5C1230.4,249.1 1237,254.8 1242.7,256.4C1248.3,258.1 1254,256.2 1259.6,256.4C1265.3,256.7 1271,257.1 1276.6,257.8C1282.3,258.6 1287.9,259.5 1293.6,260.7C1299.2,261.8 1307.6,264.4 1310.5,264.9C1313.5,265.5 1309.3,262.9 1311.3,264C1313.3,265.1 1319.8,270.9 1322.6,271.5C1325.4,272.1 1326.7,270.2 1328.3,267.7C1329.8,265.2 1330.5,260.2 1332,256.4C1333.6,252.7 1335.5,248.7 1337.7,245.1C1339.9,241.5 1342.7,237 1345.2,234.8C1347.7,232.6 1349.6,232.4 1352.8,231.9C1355.9,231.5 1361.3,232.9 1364.1,231.9C1366.9,231 1368.2,228.8 1369.7,226.3C1371.3,223.8 1372.2,221.2 1373.5,216.8C1374.8,212.5 1375.7,204 1377.3,199.9C1378.8,195.8 1380.7,194.5 1382.9,192.3C1385.1,190.1 1388,188 1390.5,186.7C1393,185.4 1395.6,186.1 1398,184.8C1400.4,183.6 1402.4,179.9 1404.6,179.2C1406.8,178.4 1408.8,179 1411.2,180.1C1413.6,181.2 1415.9,184.7 1418.7,185.8C1421.6,186.9 1425.3,186.1 1428.2,186.7C1431,187.3 1433.2,189.2 1435.7,189.5C1438.2,189.8 1440.7,190 1443.2,188.6C1445.7,187.2 1447.9,183.9 1450.8,181C1453.6,178.2 1457.7,172.2 1460.2,171.2C1462.7,170.3 1464.3,172.8 1465.8,175.4C1467.4,178 1467.7,182.3 1469.6,186.7C1471.5,191.1 1474,196.3 1477.2,201.8C1480.3,207.3 1486,214.2 1488.5,219.7C1491,225.2 1491.6,232.2 1492.2,234.8" fill="none" stroke="#d84a10" stroke-width="1.15"/><path d="M48.1,689.2C50.4,677.7 58.9,636.5 62.2,620C65.5,603.5 64.8,598.1 67.8,590.3C70.9,582.5 77.7,574.3 80.6,573.3C83.4,572.4 83.2,579.4 84.8,584.6C86.5,589.8 88.8,598.5 90.5,604.4C92.1,610.3 92.8,610.5 94.7,620C96.6,629.4 97.8,644.7 101.8,661C105.8,677.2 111.2,705.7 118.7,717.5C126.3,729.3 136.6,731.6 147,731.6C157.4,731.6 169.6,724.6 180.9,717.5C192.2,710.4 205.2,705.5 214.8,689.2C224.5,673 233.7,638.8 238.9,620C244.1,601.1 243.8,589.1 245.9,576.1C248.1,563.2 249.9,551.9 251.6,542.2C253.2,532.6 253.9,520.1 255.8,518.2C257.7,516.3 260.3,527.4 262.9,530.9C265.5,534.5 268.6,539.9 271.4,539.4C274.2,538.9 276.1,533.3 279.9,528.1C283.6,522.9 289.8,516.8 294,508.3C298.2,499.8 302.5,485 305.3,477.2C308.1,469.4 308.6,465.4 311,461.7C313.3,457.9 316.1,460.5 319.4,454.6C322.7,448.7 327.4,434.3 330.7,426.3C334,418.3 336.6,412 339.2,406.5C341.8,401.1 343.7,395.7 346.3,393.8C348.9,391.9 352.2,392.2 354.8,395.2C357.4,398.3 359.2,404.2 361.8,412.2C364.4,420.2 367,433.9 370.3,443.3C373.6,452.7 377.9,460.7 381.6,468.7C385.4,476.7 389.4,485.5 392.9,491.3C396.5,497.2 399.5,503.1 402.8,504.1C406.1,505 408.7,499.6 412.7,497C416.7,494.4 422.6,488.5 426.9,488.5C431.1,488.5 434.4,494.4 438.2,497C441.9,499.6 445.7,503.6 449.5,504.1C453.2,504.5 457,503.8 460.8,499.8C464.5,495.8 468.9,486.2 472.1,480C475.3,473.9 477.3,470.6 480,463.1C482.7,455.5 485.7,444.2 488.5,434.8C491.3,425.4 493.7,415 497,406.5C500.3,398.1 504,389.3 508.3,383.9C512.5,378.5 517.7,374 522.4,374C527.1,374 531.8,382 536.5,383.9C541.2,385.8 546.9,385.8 550.7,385.3C554.4,384.9 556.8,380.4 559.2,381.1C561.5,381.8 562,386 564.8,389.6C567.6,393.1 571.9,398.5 576.1,402.3C580.4,406.1 586.5,408.7 590.2,412.2C594,415.7 595.9,418.8 598.7,423.5C601.6,428.2 604.4,435.5 607.2,440.5C610,445.4 612.9,449.9 615.7,453.2C618.5,456.5 621.8,459.3 624.2,460.2C626.5,461.2 627.9,460.7 629.8,458.8C631.7,456.9 633.6,452.9 635.5,448.9C637.4,444.9 638.8,437.8 641.1,434.8C643.5,431.8 645.8,431.6 649.6,431.1C653.4,430.7 660.4,430.9 663.7,432C667,433.1 667,436.6 669.4,437.6C671.8,438.7 675.1,436.8 677.9,438.2C680.7,439.6 683.1,444.6 686.4,446.1C689.7,447.7 694.8,448.5 697.7,447.5C700.5,446.6 701,442.6 703.3,440.5C705.7,438.3 709,438.6 711.8,434.8C714.6,431 717.5,422.1 720.3,417.8C723.1,413.6 725.9,413.1 728.8,409.4C731.6,405.6 734.4,400.9 737.2,395.2C740.1,389.6 742.9,381.6 745.7,375.4C748.6,369.3 752.3,363 754.2,358.5C756.1,354 755.1,353.3 757,348.3C758.9,343.3 762.7,333.5 765.5,328.5C768.3,323.6 771.6,319.6 774,318.6C776.3,317.7 777.8,320.3 779.6,322.9C781.5,325.5 782.9,330.9 785.3,334.2C787.7,337.5 791,338.4 793.8,342.7C796.6,346.9 799.9,353.2 802.3,359.6C804.6,366 805.1,374.9 807.9,381.1C810.7,387.3 815.5,391.9 819.2,396.6C823,401.4 827.2,404.9 830.5,409.4C833.8,413.8 836.2,419.3 839,423.5C841.8,427.7 844.9,432.4 847.5,434.8C850.1,437.3 852.2,438.7 854.6,438.2C856.9,437.7 859.5,435.1 861.6,432C863.7,428.8 865.2,421.4 867.3,419.3C869.4,417.1 872,420.2 874.3,419.3C876.7,418.3 879.1,411 881.4,413.6C883.8,416.2 886.6,427.5 888.5,434.8C890.4,442.1 890.6,448.9 892.7,457.4C894.8,465.9 898.4,477.2 901.2,485.7C904,494.2 906.4,500.8 909.7,508.3C913,515.8 917.2,523.9 921,530.9C924.8,538 928.5,545.1 932.3,550.7C936.1,556.4 940.3,562.7 943.6,564.8C946.9,567 949.4,563.7 952.1,563.4C954.8,563.2 956.8,567 960,563.4C963.2,559.9 967.5,547.2 971.3,542.2C975.1,537.3 979.3,534.2 982.6,533.7C985.9,533.3 988.3,537 991.1,539.4C993.9,541.8 996.7,544.3 999.6,547.9C1002.4,551.4 1005,557.7 1008.1,560.6C1011.1,563.5 1014.7,566.1 1018,565.4C1021.2,564.7 1024.8,559.8 1027.8,556.4C1030.9,553 1033.5,548.6 1036.3,545.1C1039.2,541.5 1042.2,538.2 1044.8,535.2C1047.4,532.1 1050,530.7 1051.9,526.7C1053.8,522.7 1054.5,518.4 1056.1,511.1C1057.8,503.8 1059.9,490.4 1061.8,482.9C1063.7,475.3 1065.5,470.6 1067.4,465.9C1069.3,461.2 1070.7,460.2 1073.1,454.6C1075.4,448.9 1078.7,439 1081.6,432C1084.4,424.9 1087.7,416.2 1090,412.2C1092.4,408.2 1092.9,408.2 1095.7,408C1098.5,407.7 1103.2,411.2 1107,410.8C1110.8,410.3 1115,409.6 1118.3,405.1C1121.6,400.6 1124,391 1126.8,383.9C1129.6,376.9 1132,367.4 1135.3,362.7C1138.6,358 1143.7,357.8 1146.6,355.7C1149.4,353.5 1150.3,351.7 1152.2,350C1154.1,348.3 1155.1,345.8 1157.9,345.5C1160.7,345.2 1165.4,347.4 1169.2,348.3C1173,349.2 1177.2,350 1180.5,351.1C1183.8,352.3 1185.7,355.1 1189,355.4C1192.3,355.6 1196,353.7 1200.3,352.5C1204.5,351.4 1210.2,348.1 1214.4,348.3C1218.7,348.5 1221,353 1225.7,354C1230.4,354.9 1238,355.1 1242.7,354C1247.4,352.8 1250.2,349.2 1254,346.9C1257.8,344.5 1261.5,342.2 1265.3,339.8C1269.1,337.5 1271.9,333.5 1276.6,332.8C1281.3,332 1288.4,335.3 1293.6,335.6C1298.8,335.8 1303.9,336.8 1307.7,334.2C1311.5,331.6 1313.8,322.5 1316.2,320C1318.5,317.6 1320,318.1 1321.8,319.5C1323.7,320.9 1324.7,325.6 1327.5,328.5C1330.3,331.4 1334.1,336.1 1338.8,337C1343.5,337.9 1351,335.3 1355.8,334.2C1360.5,333 1363.3,328.8 1367.1,329.9C1370.8,331.1 1376.2,339.6 1378.4,341.2C1380.5,342.9 1378.5,341.1 1380,339.9C1381.5,338.7 1384.4,336 1387.5,334.2C1390.7,332.5 1395.1,331.4 1398.8,329.5C1402.6,327.6 1407.3,325.4 1410.2,322.9C1413,320.4 1414.2,316.5 1415.8,314.4C1417.4,312.4 1418,310.5 1419.6,310.7C1421.1,310.8 1422.7,313.8 1425.2,315.4C1427.7,317 1431.5,318.7 1434.7,320.1C1437.8,321.5 1441.9,322.1 1444.1,323.9C1446.3,325.6 1446.6,327.5 1447.8,330.5C1449.1,333.4 1450.4,338 1451.6,341.8C1452.9,345.5 1454.1,349.3 1455.4,353.1C1456.6,356.8 1457.6,360.6 1459.2,364.4C1460.7,368.2 1462.9,372.2 1464.8,375.7C1466.7,379.2 1468.6,382.3 1470.5,385.1C1472.3,387.9 1474.2,390.3 1476.1,392.7C1478,395 1480,397.9 1481.8,399.3C1483.5,400.6 1484.9,401.2 1486.5,400.8C1488.1,400.3 1490.4,397.1 1491.2,396.4" fill="none" stroke="#d84a10" stroke-width="1.15"/><path d="M20.5,552.9V568.9M30.5,551.4V563M34.5,545.4V557.3M39.5,542.2V551.4M44.5,513V543.2M57.5,538.3V558.8M62.5,524.2V542.5M71.5,532V560.3M76.5,520.1V536.5M80.5,500.1V535.3M94.5,593V622.8M108.5,643.6V673.3M122.5,640.6V676.3M126.5,628.7V651M131.5,622.8V643.6M136.5,603.1V634.6M154.5,618.3V636.1M158.5,602.2V627.2M163.5,591.2V610.9M168.5,490V607.3M172.5,463.3V498M182.5,482.6V502.4M191.5,460.6V502M195.5,453.3V498.8M204.5,444.2V465M218.5,466.5V509M223.5,419.3V472.1M232.5,403.2V437.9M241.5,426.9V446.7M246.5,404.2V438.7M250.5,411.1V431.6M264.5,316.6V349.6M269.5,282.1V348.1M287.5,351.8V368.5M301.5,361.3V389.9M306.5,339.3V373.4M310.5,333.3V372.3M315.5,315.7V343.7M329.5,334.9V358M347.5,371.6V393.2M352.5,359.1V377.8M366.5,430.5V466.8M370.5,421.7V434.9M388.5,443.7V475.6M393.5,450.3V464.6M402.5,444.8V462.4M407.5,410.7V431.7M412.5,398.2V419.1M416.5,370.2V407.7M421.5,367.2V394.8M430.5,358V387.3M434.5,323.3V378.9M448.5,306V360.5M462.5,321.1V346.2M471.5,324.4V409.1M476.5,318.2V344.6M481.5,311.9V330.3M485.5,309.9V323.6M499.5,339.1V360M504.5,323.7V349M508.5,313.4V342.4M522.5,320.4V355.6M527.5,321.5V344.6M531.5,270.2V342.4M536.5,251.8V284.1M550.5,254.4V295.1M563.5,368.8V402.9M573.5,351.2V404M582.5,352.3V364.4M605.5,371V410.6M614.5,406.2V439.2M632.5,385.9V428.2M637.5,355.6V391.9M646.5,372.1V390.8M655.5,361.7V402.9M665.5,341.3V390.8M669.5,314.2V343.5M678.5,356.7V369.9M683.5,302.4V372.1M688.5,296.2V320.4M701.5,297.2V311.5M706.5,280.7V311M711.5,269.7V284M720.5,243.8V278.1M734.5,268.6V284.7M743.5,235V278.5M756.5,289.5V315.4M761.5,286.9V311M766.5,260.5V288.4M770.5,201.6V274.1M789.5,307.5V344.5M816.5,351V370.8M844.5,390.6V404.9M848.5,388.4V397.2M853.5,377.4V393.9M858.5,363.1V384M876.5,377.2V402.4M904.5,478.8V507.1M908.5,484.1V508.1M918.5,489.3V511.3M936.5,496.2V536.4M940.5,487.2V502.9M950.5,469V514.4M954.5,485.1V497.7M968.5,493.5V539.6M973.5,486.2V526M977.5,462.1V492.4M982.5,446.4V478.8M991.5,432.7V473.2M996.5,425.4V443.2M1000.5,410.7V450.5M1005.5,385.2V450.5M1010.5,368.4V394M1019.5,370.9V385.6M1032.5,383.5V390.8M1042.5,376.2V389.2M1046.5,329.5V389.2M1051.5,319.9V340.4M1065.5,334.5V344.4M1069.5,315.2V338.4M1078.5,309.6V341.4M1083.5,306.6V338.4M1088.5,300V329.5M1092.5,296.7V309.6M1097.5,289.7V306.6M1102.5,259.8V293.7M1106.5,240.9V270.8M1115.5,283.7V335.5M1129.5,249.9V360.3M1138.5,256.9V315.6M1148.5,261.4V276.8M1152.5,260.8V279.7M1166.5,323.5V349.4M1180.5,310V331.9M1189.5,287.7V340.4M1194.5,266.8V296.7M1203.5,276.2V297.6M1207.5,265.8V285.7M1226.5,307V352.8M1230.5,265.2V343.4M1244.5,271.8V308.5M1249.5,281.2V294.4M1276.5,294.4V318.9M1295.5,297.2V313.8M1299.5,272.8V303.8M1308.5,269.9V295.4M1318.5,273.1V290.6M1332.5,237.9V329.3M1341.5,222V250M1364.5,262V283M1368.5,257V280M1373.5,204V268M1378.5,137V223M1387.5,214V236M1400.5,208V253M1414.5,263.5V293.7M1424.5,264.5V313.5M1428.5,264.5V304M1437.5,258V283.4M1442.5,259.8V284.3M1460.5,351.2V362.5M1474.5,352V375M1483.5,346V366.6M1488.5,323V371" stroke="#0c64c4" stroke-width="1" fill="none"/><path d="M19.2,552.9h3.6V561.8h-3.6zM28.4,554.3h3.6V557.3h-3.6zM33,549.9h3.6V556.6h-3.6zM37.6,542.2h3.6V549.9h-3.6zM42.2,513h3.6V542.5h-3.6zM56,541h3.6V552.9h-3.6zM60.6,536.5h3.6V541.7h-3.6zM69.8,535h3.6V544.7h-3.6zM74.4,531.3h3.6V535.8h-3.6zM79,526.4h3.6V531.7h-3.6zM92.8,607.1h3.6V613.8h-3.6zM106.6,651h3.6V662.9h-3.6zM120.4,643.6h3.6V671.8h-3.6zM125,636.1h3.6V645.1h-3.6zM129.6,628.7h3.6V637.6h-3.6zM134.2,610.9h3.6V628.7h-3.6zM152.6,622.8h3.6V633.2h-3.6zM157.2,606.4h3.6V623.5h-3.6zM161.8,599h3.6V607.9h-3.6zM166.4,491.1h3.6V605.8h-3.6zM171,487.8h3.6V492.6h-3.6zM180.2,486.3h3.6V500.2h-3.6zM189.4,492.2h3.6V498h-3.6zM194,458.4h3.6V493.6h-3.6zM203.2,447.2h3.6V459.2h-3.6zM217,467.2h3.6V493.6h-3.6zM221.6,421.8h3.6V467.2h-3.6zM230.8,418.1h3.6V437.5h-3.6zM240,430.6h3.6V443.8h-3.6zM244.6,415.2h3.6V430.6h-3.6zM249.2,415.2h3.6V416.7h-3.6zM263,331.6h3.6V344.3h-3.6zM267.6,290.9h3.6V332.7h-3.6zM286,359.7h3.6V367.9h-3.6zM299.8,361.9h3.6V375.6h-3.6zM304.4,354.7h3.6V362.4h-3.6zM309,342.1h3.6V355.3h-3.6zM313.6,316.2h3.6V342.6h-3.6zM327.4,341.5h3.6V344.8h-3.6zM345.8,372.3h3.6V381.1h-3.6zM350.4,361.9h3.6V373.4h-3.6zM364.2,431.6h3.6V458h-3.6zM368.8,422.8h3.6V433.8h-3.6zM387.2,458h3.6V464.6h-3.6zM391.8,451.4h3.6V459.1h-3.6zM401,447h3.6V461.3h-3.6zM405.6,412.4h3.6V430.8h-3.6zM410.2,405.7h3.6V414.1h-3.6zM414.8,379.7h3.6V407.4h-3.6zM419.4,379.7h3.6V380.9h-3.6zM428.6,363h3.6V386.4h-3.6zM433.2,327.8h3.6V363.8h-3.6zM447,316.1h3.6V352.1h-3.6zM460.8,333.3h3.6V334.5h-3.6zM470,337.9h3.6V403.2h-3.6zM474.6,328.6h3.6V338.7h-3.6zM479.2,322.3h3.6V329.5h-3.6zM483.8,311h3.6V322.8h-3.6zM497.6,347.9h3.6V351.2h-3.6zM502.2,334.7h3.6V347.9h-3.6zM506.8,318.6h3.6V327h-3.6zM520.6,332.5h3.6V353.4h-3.6zM525.2,327h3.6V333.6h-3.6zM529.8,276.4h3.6V335.8h-3.6zM534.4,256.6h3.6V277.5h-3.6zM548.2,278.6h3.6V294h-3.6zM562,368.8h3.6V379.8h-3.6zM571.2,357.3h3.6V393h-3.6zM580.4,362.2h3.6V363.9h-3.6zM603.4,386.8h3.6V400.7h-3.6zM612.6,407.3h3.6V430.4h-3.6zM631,386.8h3.6V427.1h-3.6zM635.6,356h3.6V388.1h-3.6zM644.8,379.8h3.6V387.5h-3.6zM654,362.6h3.6V390.8h-3.6zM663.2,341.9h3.6V378.7h-3.6zM667.8,318.2h3.6V342.4h-3.6zM677,363.3h3.6V366.6h-3.6zM681.6,311.2h3.6V363.9h-3.6zM686.2,306.1h3.6V311.6h-3.6zM700,300.5h3.6V310.4h-3.6zM704.6,281.8h3.6V300.5h-3.6zM709.2,275.9h3.6V282.9h-3.6zM718.4,265.8h3.6V276.8h-3.6zM732.2,269.7h3.6V281.8h-3.6zM741.4,257h3.6V277.4h-3.6zM755.2,298.3h3.6V301.6h-3.6zM759.8,287.3h3.6V298.3h-3.6zM764.4,269.7h3.6V287.3h-3.6zM769,247.7h3.6V270.8h-3.6zM787.4,308.2h3.6V341.2h-3.6zM815,364.2h3.6V369.7h-3.6zM842.6,394.6h3.6V399.4h-3.6zM847.2,391.7h3.6V396.1h-3.6zM851.8,381.8h3.6V392.8h-3.6zM856.4,368.6h3.6V382.9h-3.6zM874.8,381.4h3.6V400.3h-3.6zM902.4,498.7h3.6V506.1h-3.6zM907,496.6h3.6V499.8h-3.6zM916.2,494.5h3.6V505h-3.6zM934.6,501.9h3.6V529.7h-3.6zM939.2,496.6h3.6V501.9h-3.6zM948.4,496.6h3.6V513.8h-3.6zM953,489.3h3.6V496.6h-3.6zM966.8,513.4h3.6V538.5h-3.6zM971.4,488.2h3.6V513.8h-3.6zM976,475.3h3.6V489.9h-3.6zM980.6,446.8h3.6V476.7h-3.6zM989.8,438.4h3.6V458.9h-3.6zM994.4,434.2h3.6V439h-3.6zM999,431.3h3.6V434.8h-3.6zM1003.6,390.8h3.6V432.1h-3.6zM1008.2,373.5h3.6V391.9h-3.6zM1017.4,372.6h3.6V377.2h-3.6zM1031.2,383.9h3.6V390.2h-3.6zM1040.4,377.2h3.6V387.2h-3.6zM1045,330.5h3.6V384.2h-3.6zM1049.6,327.5h3.6V332.5h-3.6zM1063.4,335.5h3.6V343h-3.6zM1068,321.1h3.6V333.5h-3.6zM1077.2,327.5h3.6V340.4h-3.6zM1081.8,309.6h3.6V327.5h-3.6zM1086.4,304.6h3.6V311.6h-3.6zM1091,304h3.6V306h-3.6zM1095.6,292.1h3.6V305.2h-3.6zM1100.2,260.8h3.6V292.7h-3.6zM1104.8,247.9h3.6V262.8h-3.6zM1114,294.7h3.6V312.6h-3.6zM1127.8,252.9h3.6V324.5h-3.6zM1137,264.2h3.6V273.8h-3.6zM1146.2,264.2h3.6V275.8h-3.6zM1150.8,264.2h3.6V268.8h-3.6zM1164.6,327.1h3.6V342.4h-3.6zM1178.4,323.1h3.6V330.5h-3.6zM1187.6,300h3.6V333.5h-3.6zM1192.2,288.1h3.6V295.7h-3.6zM1201.4,283.7h3.6V296.7h-3.6zM1206,266.2h3.6V284.7h-3.6zM1224.4,335.9h3.6V339.6h-3.6zM1229,271.8h3.6V336.8h-3.6zM1242.8,292.5h3.6V303.8h-3.6zM1247.4,285.9h3.6V292.5h-3.6zM1275,299.1h3.6V316.5h-3.6zM1293.4,302.9h3.6V309.5h-3.6zM1298,274.3h3.6V302.9h-3.6zM1307.2,275h3.6V294.4h-3.6zM1316.4,280.3h3.6V285h-3.6zM1330.2,243h3.6V328.9h-3.6zM1339.4,232h3.6V245h-3.6zM1362.4,270h3.6V279h-3.6zM1367,266h3.6V277h-3.6zM1371.6,213h3.6V266h-3.6zM1376.2,165h3.6V213h-3.6zM1385.4,223.5h3.6V234h-3.6zM1399.2,213h3.6V247h-3.6zM1413,271h3.6V274h-3.6zM1422.2,287h3.6V301h-3.6zM1426.8,284h3.6V287h-3.6zM1436,279h3.6V282h-3.6zM1440.6,276h3.6V279h-3.6zM1459,353h3.6V356h-3.6zM1472.8,354h3.6V373.8h-3.6zM1482,356.8h3.6V359h-3.6zM1486.6,325.8h3.6V353h-3.6z" fill="#0c64c4" shape-rendering="crispEdges"/><path d="M11.5,521.6V546.9M16.5,542.5V570.7M25.5,538.3V559.6M48.5,513V532.8M53.5,528.8V559.9M66.5,532.8V545.4M85.5,521.3V611.6M90.5,599V622.8M99.5,606.4V651M103.5,636.1V665.9M112.5,651V671.8M117.5,651V677.8M140.5,605.2V631.7M145.5,613.8V634.6M149.5,621.3V637.6M177.5,483.4V504.6M186.5,475.3V498.8M200.5,425.5V459.9M209.5,436V470.9M214.5,466.5V516.4M228.5,414V453.3M237.5,414.9V473.8M255.5,410.1V431M260.5,328.9V349.6M274.5,287.6V340.4M278.5,317.9V348.7M283.5,343.7V367.9M292.5,354.7V367.2M296.5,364.1V378.9M320.5,311.8V333.8M324.5,317.9V349.2M333.5,334.2V366.8M338.5,358V385.5M342.5,364.6V388.8M356.5,354.7V367.9M361.5,361.9V475.6M375.5,421.7V452.5M379.5,432.7V459.1M384.5,454.7V465.7M398.5,450.3V469M425.5,361.8V388.9M439.5,311.9V341.2M444.5,308.9V352.9M453.5,301V326.1M458.5,308.9V335.3M467.5,325.3V405.7M490.5,311V322.8M494.5,316V353.4M513.5,314.9V325.9M517.5,324.8V362.2M540.5,255.5V272M545.5,262.1V295.1M554.5,278.6V338M559.5,296.2V391.9M568.5,368.8V422.7M577.5,352.3V373.2M586.5,355.6V366.6M591.5,363.3V379.8M596.5,375.4V399.6M600.5,384.2V405.1M609.5,386.4V446.9M619.5,406.6V415M623.5,411.7V418.3M628.5,407.3V453.5M642.5,353.4V387.5M651.5,378.7V404M660.5,333.6V380.9M674.5,296.2V370.5M692.5,301.7V320.4M697.5,287V316M715.5,268V300.5M724.5,253.2V282.9M729.5,265.8V284M738.5,262.7V279M747.5,233.5V281.8M752.5,279.6V322M775.5,235.7V313.7M780.5,268.6V369.7M784.5,321.4V352.1M793.5,303.8V332.4M798.5,326.9V353.2M802.5,347.7V379.6M807.5,370.8V388.4M812.5,365.3V374.1M821.5,360.9V376.3M826.5,343.4V379.6M830.5,363.1V381.8M835.5,377.4V389.5M839.5,386.2V404.9M862.5,359.8V396.1M867.5,388.4V404.9M872.5,391.9V405.5M881.5,378.3V412.8M885.5,385.6V446.4M890.5,410.7V441.1M894.5,432.7V486.2M899.5,473.6V526M913.5,496.6V509.2M922.5,487.8V496.6M927.5,490.3V509.2M931.5,489.9V536.4M945.5,495.6V521.8M959.5,488.2V513.4M964.5,497.7V541.7M986.5,437.6V464.2M1014.5,365.7V383.5M1023.5,368.9V396.1M1028.5,370.9V390.8M1037.5,383.5V394M1056.5,319.9V339.4M1060.5,327.5V343.4M1074.5,317.5V365.3M1111.5,247.5V329.5M1120.5,288.7V302M1124.5,299.2V333.5M1134.5,251.9V286.7M1143.5,259.8V276.8M1157.5,255.9V321.5M1161.5,303.6V365.3M1170.5,323.9V331.5M1175.5,315.2V333.5M1184.5,313.2V338.4M1198.5,286.7V302.6M1212.5,254.9V288.7M1216.5,271.8V298.6M1221.5,277.5V409M1235.5,269.9V295.4M1240.5,276.5V310.4M1253.5,284.1V295.4M1258.5,283.1V299.1M1262.5,292.5V311.4M1267.5,291.6V317M1272.5,313.3V329.3M1281.5,296.3V303.8M1286.5,300.1V308.5M1290.5,302.9V313.3M1304.5,273.1V296.3M1313.5,273.7V294.4M1322.5,281.2V390.5M1327.5,288.8V331.2M1336.5,208V256M1345.5,228V250M1350.5,244V268M1354.5,262V280M1359.5,268V284M1382.5,163V240M1391.5,216V255M1396.5,238V249M1405.5,208V246M1410.5,228V279M1419.5,268V305M1433.5,272V289M1446.5,272V332M1451.5,324.8V359.7M1456.5,337V358M1465.5,351.2V360.6M1470.5,352V375M1479.5,346V360.6M1492.5,319V334" stroke="#dc0000" stroke-width="1" fill="none"/><path d="M10,540.2h3.6V543.9h-3.6zM14.6,543.2h3.6V561.8h-3.6zM23.8,552.9h3.6V558.1h-3.6zM46.8,513h3.6V529.8h-3.6zM51.4,529.1h3.6V552.9h-3.6zM65.2,533.8h3.6V544.7h-3.6zM83.6,526.4h3.6V606.7h-3.6zM88.2,606.1h3.6V613.8h-3.6zM97.4,607.1h3.6V643.6h-3.6zM102,642.1h3.6V658.4h-3.6zM111.2,655.5h3.6V667.4h-3.6zM115.8,658.4h3.6V673.3h-3.6zM138.8,611.2h3.6V625.7h-3.6zM143.4,622.8h3.6V630.2h-3.6zM148,627.2h3.6V633.2h-3.6zM175.6,487h3.6V500.2h-3.6zM184.8,486.3h3.6V495.8h-3.6zM198.6,458.4h3.6V459.9h-3.6zM207.8,447.2h3.6V470.6h-3.6zM212.4,470.2h3.6V493.6h-3.6zM226.2,422.2h3.6V437.5h-3.6zM235.4,418.1h3.6V443.8h-3.6zM253.8,415.2h3.6V416.7h-3.6zM258.4,334.9h3.6V343.7h-3.6zM272.2,290.2h3.6V339.3h-3.6zM276.8,338.2h3.6V344.8h-3.6zM281.4,344.3h3.6V367.9h-3.6zM290.6,359.7h3.6V366.3h-3.6zM295.2,365h3.6V375.6h-3.6zM318.2,315.7h3.6V329.8h-3.6zM322.8,329.4h3.6V343.7h-3.6zM332,342.6h3.6V362.4h-3.6zM336.6,361.9h3.6V374.5h-3.6zM341.2,373.8h3.6V381.1h-3.6zM355,362.4h3.6V366.8h-3.6zM359.6,365h3.6V458h-3.6zM373.4,422.8h3.6V451.4h-3.6zM378,450.3h3.6V456.9h-3.6zM382.6,455.8h3.6V464.6h-3.6zM396.4,451.4h3.6V461.3h-3.6zM424,379.7h3.6V386.4h-3.6zM437.8,328.6h3.6V334.5h-3.6zM442.4,334h3.6V352.1h-3.6zM451.6,316.1h3.6V320.3h-3.6zM456.2,319.9h3.6V334.5h-3.6zM465.4,329.5h3.6V403.2h-3.6zM488.4,311h3.6V317.7h-3.6zM493,317.1h3.6V351.2h-3.6zM511.4,319.3h3.6V325.2h-3.6zM516,325.2h3.6V353.4h-3.6zM539,257h3.6V270.9h-3.6zM543.6,270.9h3.6V294h-3.6zM552.8,279.7h3.6V330.3h-3.6zM557.4,322.6h3.6V379.8h-3.6zM566.6,368.8h3.6V393h-3.6zM575.8,356.7h3.6V362.2h-3.6zM585,362.2h3.6V364.4h-3.6zM589.6,364.4h3.6V377.6h-3.6zM594.2,376.5h3.6V389.7h-3.6zM598.8,389h3.6V400.7h-3.6zM608,386.8h3.6V430.4h-3.6zM617.2,407.3h3.6V413.9h-3.6zM621.8,412.8h3.6V417.2h-3.6zM626.4,417.2h3.6V427.1h-3.6zM640.2,356h3.6V386.4h-3.6zM649.4,379.8h3.6V390.8h-3.6zM658.6,362.6h3.6V379.8h-3.6zM672.4,318.2h3.6V366.6h-3.6zM690.8,306.1h3.6V312h-3.6zM695.4,310.5h3.6V312h-3.6zM713.8,275.9h3.6V277h-3.6zM723,265.8h3.6V270.8h-3.6zM727.6,269.7h3.6V279.6h-3.6zM736.8,269.7h3.6V278.1h-3.6zM746,257h3.6V281.2h-3.6zM750.6,280.7h3.6V300.5h-3.6zM773.6,247.7h3.6V281.8h-3.6zM778.2,279.6h3.6V340.1h-3.6zM782.8,339h3.6V341.2h-3.6zM792,308.2h3.6V331.3h-3.6zM796.6,330.2h3.6V348.8h-3.6zM801.2,348.8h3.6V375.7h-3.6zM805.8,375.2h3.6V387.3h-3.6zM810.4,366.9h3.6V371.9h-3.6zM819.6,364.2h3.6V375.2h-3.6zM824.2,368.6h3.6V378.5h-3.6zM828.8,376.3h3.6V378.5h-3.6zM833.4,378.5h3.6V388.4h-3.6zM838,387.3h3.6V399.4h-3.6zM861,368.6h3.6V390.6h-3.6zM865.6,390.6h3.6V395h-3.6zM870.2,392.9h3.6V400.3h-3.6zM879.4,381.4h3.6V390.8h-3.6zM884,389.8h3.6V435.9h-3.6zM888.6,433.8h3.6V435.9h-3.6zM893.2,433.8h3.6V476.7h-3.6zM897.8,475.7h3.6V506.1h-3.6zM911.6,497.7h3.6V505h-3.6zM920.8,492.9h3.6V495.6h-3.6zM925.4,495h3.6V504h-3.6zM930,504h3.6V529.7h-3.6zM943.8,496.6h3.6V513.8h-3.6zM957.6,489.3h3.6V499.1h-3.6zM962.2,498.3h3.6V538.5h-3.6zM985.2,446.8h3.6V458.9h-3.6zM1012.8,373.5h3.6V377.2h-3.6zM1022,373h3.6V378.9h-3.6zM1026.6,378.3h3.6V390.2h-3.6zM1035.8,383.9h3.6V387.3h-3.6zM1054.2,327.5h3.6V333.5h-3.6zM1058.8,333.1h3.6V342.4h-3.6zM1072.6,321.1h3.6V339.4h-3.6zM1109.4,247.9h3.6V312.6h-3.6zM1118.6,294.7h3.6V300.6h-3.6zM1123.2,300h3.6V324.5h-3.6zM1132.4,252.9h3.6V273.8h-3.6zM1141.6,264.2h3.6V274.8h-3.6zM1155.4,264.2h3.6V304.6h-3.6zM1160,304h3.6V342.4h-3.6zM1169.2,326.5h3.6V327.7h-3.6zM1173.8,323.1h3.6V327.5h-3.6zM1183,327.5h3.6V333.5h-3.6zM1196.8,288.1h3.6V296.7h-3.6zM1210.6,266.2h3.6V286.7h-3.6zM1215.2,277.4h3.6V282.1h-3.6zM1219.8,278.4h3.6V339.6h-3.6zM1233.6,271.8h3.6V285h-3.6zM1238.2,284.1h3.6V304.8h-3.6zM1252,285h3.6V287.4h-3.6zM1256.6,285.9h3.6V297.2h-3.6zM1261.2,296.3h3.6V298.2h-3.6zM1265.8,296.3h3.6V316.1h-3.6zM1270.4,315.1h3.6V317.6h-3.6zM1279.6,299.1h3.6V302h-3.6zM1284.2,301h3.6V308.2h-3.6zM1288.8,307h3.6V309.5h-3.6zM1302.6,274.3h3.6V295.4h-3.6zM1311.8,274.6h3.6V285h-3.6zM1321,284.1h3.6V312.3h-3.6zM1325.6,311.9h3.6V328.9h-3.6zM1334.8,243.2h3.6V247h-3.6zM1344,232h3.6V247h-3.6zM1348.6,247h3.6V266h-3.6zM1353.2,264h3.6V277h-3.6zM1357.8,272h3.6V280h-3.6zM1380.8,165h3.6V232h-3.6zM1390,220.6h3.6V245h-3.6zM1394.6,244h3.6V247h-3.6zM1403.8,213h3.6V230h-3.6zM1408.4,231h3.6V275.8h-3.6zM1417.6,271h3.6V301h-3.6zM1431.4,276.7h3.6V282.4h-3.6zM1445.2,275.8h3.6V328.6h-3.6zM1449.8,328.6h3.6V341.8h-3.6zM1454.4,340h3.6V356h-3.6zM1463.6,354h3.6V356h-3.6zM1468.2,355h3.6V373.8h-3.6zM1477.4,354h3.6V357.8h-3.6zM1491.2,326.7h3.6V333.7h-3.6z" fill="#dc0000" shape-rendering="crispEdges"/><path d="M390.1,620C395.8,618.3 413.7,613.4 424,610.1C434.4,606.8 443,603.5 452.3,600.2C461.6,596.9 470.7,593.8 480,590.3C489.3,586.7 498.8,583 508.3,579C517.7,575 527.1,570.5 536.5,566.3C546,562 555.4,557.6 564.8,553.5C574.2,549.4 583.7,545.7 593.1,541.7C602.5,537.7 611.9,533.4 621.3,529.5C630.8,525.6 640.2,522.4 649.6,518.2C659,514 668.5,509 677.9,504.1C687.3,499.1 696.7,493.5 706.1,488.5C715.6,483.6 725,478.9 734.4,474.4C743.8,469.9 753.3,465.9 762.7,461.7C772.1,457.4 781.5,452.7 791,448.9C800.4,445.2 809.8,442.3 819.2,439C828.6,435.7 838.1,432.4 847.5,429.2C856.9,425.9 868.7,421.8 875.8,419.3C882.8,416.7 885.2,415 889.9,413.6C894.6,412.2 897,411.5 904,410.8C911.1,410.1 923,409.8 932.3,409.4C941.6,408.9 951.6,408.3 960,408C968.4,407.6 975.1,408.1 982.6,407.4C990.2,406.7 997.7,405.3 1005.2,403.7C1012.8,402.2 1020.3,400.2 1027.8,398.1C1035.4,395.9 1042.9,393.4 1050.5,391C1058,388.5 1065.5,385.5 1073.1,383.4C1080.6,381.2 1088.2,379.7 1095.7,378.3C1103.2,376.9 1110.8,376.2 1118.3,374.9C1125.8,373.6 1133.4,371.7 1140.9,370.4C1148.5,369 1156,368 1163.5,367C1171.1,365.9 1177.7,365 1186.1,364.1C1194.6,363.3 1205,362.4 1214.4,361.9C1223.8,361.3 1233.3,361.2 1242.7,360.7C1252.1,360.3 1261.5,359.9 1271,359C1280.4,358.2 1289.8,356.9 1299.2,355.7C1308.6,354.4 1318.1,352.9 1327.5,351.4C1336.9,350 1349.2,347.9 1355.8,346.9C1362.4,345.9 1363,345.9 1367.1,345.5C1371.1,345 1374.7,344.8 1380,344.2C1385.3,343.7 1392.6,342.8 1398.8,342.1C1405.1,341.5 1411.4,341 1417.7,340.5C1424,339.9 1431.8,339.2 1436.5,338.9C1441.3,338.7 1442.8,338.6 1446,338.9C1449.1,339.3 1450.7,340.8 1455.4,341.2C1460.1,341.6 1468,341.4 1474.2,341.4C1480.5,341.4 1489.6,341.4 1492.7,341.4" fill="none" stroke="#ff8800" stroke-width="2.2" stroke-linejoin="round"/><path d="M279.9,620C285,616 299.2,605.4 311,595.9C322.7,586.5 336.4,572.9 350.5,563.4C364.7,554 383.5,546 395.8,539.4C408,532.8 414.6,529.5 424,523.9C433.5,518.2 443,511.4 452.3,505.5C461.6,499.6 472.6,493.7 480,488.5C487.4,483.3 490.8,479.1 497,474.4C503.1,469.7 510.2,464.5 516.7,460.2C523.3,456 529.5,452.5 536.5,448.9C543.6,445.4 551.6,441.9 559.2,439C566.7,436.2 575.2,433.9 581.8,432C588.4,430.1 592.1,429.4 598.7,427.7C605.3,426.1 614.7,424.2 621.3,422.1C627.9,420 631.7,417.8 638.3,415C644.9,412.2 653.4,408.9 660.9,405.1C668.5,401.4 676,396.6 683.5,392.4C691.1,388.2 699.6,383 706.1,379.7C712.7,376.4 716.5,375.4 723.1,372.6C729.7,369.8 739.1,365.3 745.7,362.7C752.3,360.1 757,358.7 762.7,357.1C768.3,355.4 774,353.8 779.6,352.8C785.3,351.9 790,351.8 796.6,351.4C803.2,351 811.7,350.5 819.2,350.6C826.8,350.6 834.3,351.1 841.8,351.7C849.4,352.3 856.9,353.1 864.5,354C872,354.8 879.5,355.7 887.1,356.8C894.6,357.9 902.1,359.4 909.7,360.5C917.2,361.5 923.9,362.1 932.3,363C940.7,363.9 951.6,364.6 960,365.8C968.4,367.1 975.1,369 982.6,370.4C990.2,371.7 997.7,373.3 1005.2,374C1012.8,374.7 1020.3,374.2 1027.8,374.6C1035.4,375 1042.9,375.9 1050.5,376.3C1058,376.7 1064.6,377.2 1073.1,377.1C1081.6,377.1 1091.9,376.8 1101.3,376C1110.8,375.3 1120.2,373.9 1129.6,372.6C1139,371.3 1148.5,369.9 1157.9,368.4C1167.3,366.9 1177.7,365 1186.1,363.6C1194.6,362.2 1201.2,360.7 1208.8,359.9C1216.3,359 1223.8,358.8 1231.4,358.5C1238.9,358.2 1246.5,357.9 1254,357.9C1261.5,357.9 1269.1,358.2 1276.6,358.5C1284.1,358.7 1291.7,359.1 1299.2,359.3C1306.8,359.6 1314.3,360.1 1321.8,359.9C1329.4,359.7 1336.9,359 1344.5,357.9C1352,356.8 1361.1,354.5 1367.1,353.4C1373,352.3 1374.7,352.7 1380,351.2C1385.3,349.7 1392.6,346.5 1398.8,344.6C1405.1,342.7 1411.4,341.5 1417.7,339.9C1424,338.3 1430.3,336.7 1436.5,335.2C1442.8,333.6 1449.1,332.1 1455.4,330.5C1461.7,328.8 1469.2,326.6 1474.2,325.2C1479.3,323.8 1482.4,322.7 1485.5,322C1488.7,321.3 1491.8,321.2 1493.1,321" fill="none" stroke="#0c780c" stroke-width="2.2" stroke-linejoin="round"/><path d="M127.2,620C130.5,619 140.9,616.9 147,614.3C153.1,611.7 158.3,608.9 164,604.4C169.6,599.9 174.3,593.6 180.9,587.5C187.5,581.3 196,573.1 203.5,567.7C211.1,562.2 218.6,559 226.1,554.9C233.7,550.9 241.7,548.1 248.8,543.6C255.8,539.2 262,533.5 268.6,528.1C275.1,522.7 281.3,517 288.3,511.1C295.4,505.2 303.4,500.3 311,492.8C318.5,485.2 326.5,474.6 333.6,465.9C340.6,457.2 347.7,446.6 353.4,440.5C359,434.3 360.9,434.3 367.5,429.2C374.1,424 386.3,413.1 392.9,409.4C399.5,405.6 401.9,408.4 407.1,406.5C412.2,404.7 416.5,401.6 424,398.1C431.6,394.5 443,389.4 452.3,385.3C461.6,381.3 472.6,376.1 480,373.7C487.4,371.3 490.4,371.6 497,370.9C503.6,370.2 513,370.4 519.6,369.5C526.2,368.6 530.9,366.3 536.5,365.3C542.2,364.2 546.9,363.5 553.5,363C560.1,362.5 569.5,362.8 576.1,362.4C582.7,362.1 586.5,362 593.1,361C599.7,360.1 608.2,358.1 615.7,356.8C623.2,355.5 630.8,354.1 638.3,353.4C645.8,352.7 652.4,352.7 660.9,352.5C669.4,352.4 681.6,353.1 689.2,352.5C696.7,352 699.6,350.8 706.1,349.2C712.7,347.5 721.2,344.7 728.8,342.7C736.3,340.6 743.8,337.9 751.4,337C758.9,336.1 767.4,337.1 774,337C780.6,336.9 783.4,336.7 791,336.4C798.5,336.2 810.7,336 819.2,335.6C827.7,335.2 835.2,334.7 841.8,334.2C848.4,333.6 853.1,332.4 858.8,332.2C864.5,332 871,332.3 875.8,332.8C880.5,333.2 883.3,333.8 887.1,334.7C890.8,335.7 894.6,336.6 898.4,338.4C902.1,340.2 905.9,342.4 909.7,345.5C913.5,348.5 917.2,353 921,356.8C924.8,360.6 928.1,363.9 932.3,368.1C936.5,372.3 941.8,377.7 946.4,382.2C951,386.7 954.9,390 960,395.2C965.1,400.5 971.8,408.7 977,413.6C982.1,418.6 986.9,421.8 991.1,424.9C995.3,428 996.7,430.3 1002.4,432C1008.1,433.6 1018.4,434.2 1025,434.8C1031.6,435.4 1035.4,436 1042,435.7C1048.6,435.3 1057.5,434.1 1064.6,432.5C1071.7,431 1077.3,429 1084.4,426.3C1091.4,423.6 1100.4,419.5 1107,416.4C1113.6,413.4 1118.3,412.2 1124,408C1129.6,403.7 1135.3,396.4 1140.9,391C1146.6,385.6 1152.2,380.4 1157.9,375.4C1163.5,370.5 1169.7,365.5 1174.8,361.3C1180,357.1 1186.1,352.4 1189,350C1191.8,347.6 1188.5,350 1191.8,346.9C1195.1,343.8 1203.1,335.6 1208.8,331.3C1214.4,327.1 1220.1,324.5 1225.7,321.4C1231.4,318.4 1237,315.6 1242.7,313C1248.3,310.4 1254,307.8 1259.6,305.9C1265.3,304 1270,303.1 1276.6,301.7C1283.2,300.2 1291.7,298.5 1299.2,297.4C1306.8,296.3 1314.3,296.1 1321.8,295.2C1329.4,294.2 1336.9,292.6 1344.5,291.8C1352,291 1361.1,290.8 1367.1,290.4C1373,290 1376,290.1 1380,289.4C1384,288.7 1387.5,287.7 1391.3,286.2C1395.1,284.7 1398.8,282 1402.6,280.5C1406.4,279 1409.5,278.1 1413.9,277.3C1418.3,276.5 1424,276.1 1429,275.8C1434,275.6 1439.7,275.5 1444.1,275.8C1448.5,276.1 1451.6,276.8 1455.4,277.7C1459.2,278.6 1462.9,280.2 1466.7,281.5C1470.5,282.7 1474.9,284.4 1478,285.2C1481.1,286.1 1483.1,286.5 1485.5,286.7C1488,287 1491.5,286.7 1492.7,286.7" fill="none" stroke="#0808f0" stroke-width="2.2" stroke-linejoin="round"/><path d="M28.3,620C33,612.2 49.5,584.4 56.5,573.3C63.6,562.2 66,558.2 70.7,553.5C75.4,548.8 78.7,542.7 84.8,545.1C90.9,547.4 99.4,559.7 107.4,567.7C115.4,575.7 125.3,586 132.9,593.1C140.4,600.2 147.5,606.1 152.7,610.1C157.8,614.1 160.2,616.7 164,617.1C167.7,617.6 170.6,617.4 175.3,612.9C180,608.4 187.5,598.3 192.2,590.3C196.9,582.3 198.8,574.7 203.5,564.8C208.2,554.9 214.4,544.1 220.5,530.9C226.6,517.7 233.7,499.4 240.3,485.7C246.9,472 253,461.2 260.1,448.9C267.1,436.7 276.1,421.6 282.7,412.2C289.3,402.8 294,398.5 299.6,392.4C305.3,386.3 311,381.1 316.6,375.4C322.3,369.8 328.4,362.5 333.6,358.5C338.8,354.5 343.5,351.9 347.7,351.4C351.9,350.9 354.3,351.6 359,355.7C363.7,359.7 369.8,368.8 376,375.4C382.1,382 390.1,389.8 395.8,395.2C401.4,400.6 405.7,404.6 409.9,408C414.1,411.3 417,414.6 421.2,415.6C425.4,416.5 430.6,414.9 435.3,413.6C440,412.3 444.8,411.5 449.5,408C454.2,404.4 458.5,398.6 463.6,392.4C468.7,386.2 474.9,377.8 480,370.9C485.1,364 488.5,356.8 494.1,351.1C499.8,345.5 506.9,341.2 513.9,337C521,332.8 529.9,328.4 536.5,325.7C543.1,323 547.8,320.8 553.5,320.6C559.2,320.4 563.9,322 570.5,324.3C577.1,326.5 586.5,330.2 593.1,334.2C599.7,338.2 604.9,342.9 610,348.3C615.2,353.7 619.9,361.5 624.2,366.7C628.4,371.9 631.7,376.1 635.5,379.4C639.2,382.7 643.5,385.1 646.8,386.5C650.1,387.8 652,387.6 655.3,387.3C658.6,387.1 662.8,385.9 666.6,385.1C670.3,384.2 674.1,384.1 677.9,382.2C681.6,380.3 685.4,377.5 689.2,373.7C693,370 696.3,365.3 700.5,359.6C704.7,354 709.9,345.9 714.6,339.8C719.3,333.7 724.1,328.5 728.8,322.9C733.5,317.2 738.7,310.1 742.9,305.9C747.1,301.7 750.9,299.3 754.2,297.4C757.5,295.5 759.9,296.2 762.7,294.6C765.5,292.9 768.3,289.2 771.2,287.5C774,285.9 776.3,284.9 779.6,284.7C782.9,284.5 787.7,285.2 791,286.1C794.3,287.1 796.1,287.8 799.4,290.4C802.7,292.9 806.5,297.2 810.7,301.7C815,306.1 819.7,311.1 824.9,317.2C830.1,323.3 836.2,331.6 841.8,338.4C847.5,345.2 853.1,352.3 858.8,358.2C864.5,364.1 871,369.3 875.8,373.7C880.5,378.2 883.3,380.8 887.1,385.1C890.8,389.3 894.6,394.5 898.4,399.2C902.1,403.9 905.9,408.1 909.7,413.3C913.5,418.5 917.2,425.1 921,430.3C924.8,435.5 928.1,439 932.3,444.4C936.5,449.9 941.8,457.1 946.4,463.1C951,469 956.3,475.8 960,480C963.7,484.3 965.7,485.8 968.5,488.5C971.3,491.2 974.1,494.9 977,496.4C979.8,497.9 982.1,498.6 985.4,497.6C988.7,496.5 993.5,492.9 996.7,489.9C1000,487 1001.5,484.5 1005.2,480C1009,475.6 1014.7,469.2 1019.4,463.1C1024.1,456.9 1028.3,450.6 1033.5,443.3C1038.7,436 1044.8,428.2 1050.5,419.3C1056.1,410.3 1062.2,398.3 1067.4,389.6C1072.6,380.9 1077.3,373.6 1081.6,367C1085.8,360.4 1089.6,355 1092.9,350C1096.2,345 1097.1,342 1101.3,337C1105.6,332 1112.7,325.5 1118.3,320C1124,314.6 1129.6,308.7 1135.3,304.5C1140.9,300.2 1147.5,296.6 1152.2,294.6C1156.9,292.6 1158.8,292.3 1163.5,292.3C1168.2,292.3 1175.3,293.7 1180.5,294.6C1185.7,295.5 1189.9,297.8 1194.6,298C1199.3,298.2 1204.5,296.1 1208.8,296C1213,295.9 1216.3,296.2 1220.1,297.4C1223.8,298.6 1227.1,301.9 1231.4,303.1C1235.6,304.3 1240.8,305 1245.5,304.5C1250.2,304 1254.5,301.4 1259.6,300.2C1264.8,299.1 1271,297.7 1276.6,297.4C1282.3,297.2 1287.9,298.6 1293.6,298.8C1299.2,299.1 1304.9,299.3 1310.5,298.8C1316.2,298.4 1321.8,297.9 1327.5,296C1333.1,294.1 1339.3,289.6 1344.5,287.5C1349.6,285.4 1353.9,285.4 1358.6,283.3C1363.3,281.2 1369.2,277.6 1372.7,274.8C1376.3,272 1376.9,269 1380,266.4C1383.1,263.7 1387.5,261 1391.3,258.8C1395.1,256.6 1398.8,254.9 1402.6,253.2C1406.4,251.5 1410.5,249.2 1413.9,248.5C1417.4,247.8 1420.2,248.1 1423.3,249C1426.5,250 1429.3,252.8 1432.8,254.1C1436.2,255.5 1440.6,255.5 1444.1,257C1447.5,258.4 1450.7,260.3 1453.5,262.6C1456.3,265 1458.8,268 1461,271.1C1463.2,274.2 1464.8,277.9 1466.7,281.5C1468.6,285.1 1470.1,289.5 1472.3,292.8C1474.5,296.1 1477.4,298.4 1479.9,301.3C1482.4,304.1 1485.3,307.4 1487.4,309.7C1489.6,312.1 1491.8,314.4 1492.7,315.4" fill="none" stroke="#f00808" stroke-width="2.2" stroke-linejoin="round"/><path d="M9.9,557.8C10.3,557.1 13,551.6 14.1,550.7C15.3,549.9 19.5,548.9 21.2,549.3C22.9,549.7 29.3,554.9 31.1,554.9C32.9,554.9 37.9,550.8 39.6,549.3C41.3,547.7 45.9,540.8 48.1,539.4C50.2,538 58.8,535 60.8,535.2C62.8,535.3 66.3,540.7 67.8,540.8C69.4,541 74.9,537 76.3,536.6C77.7,536.1 80.8,534.9 82,536.6C83.1,538.3 86.5,549.6 87.6,553.5C88.8,557.5 92.3,571.9 93.3,576.1C94.3,580.4 96.7,591.6 97.5,595.9C98.4,600.3 101,615.2 101.8,620C102.5,624.8 104.3,639.3 105.2,644C106,648.7 108.9,662.7 110.2,666.6C111.6,670.6 116.5,681.3 118.7,683.6C121,685.8 130,689.8 132.9,689.2C135.7,688.7 144.5,681.9 147,677.9C149.5,674 156.6,655.7 158.3,649.6C160,643.6 162.8,624.5 164,617.1C165.1,609.8 168.5,583.1 169.6,576.1C170.7,569.2 173.9,555.5 175.3,547.9C176.7,540.2 182.5,505.3 183.7,499.8C185,494.3 187,493.7 188,492.8C189,491.8 192.7,491.1 193.6,489.9C194.6,488.8 196.9,483.3 197.9,481.4C198.9,479.6 202.3,473.3 203.5,471.6C204.8,469.9 209,465.1 210.6,464.5C212.2,463.9 217.5,466.6 219.1,465.9C220.6,465.2 224.9,459.7 226.1,457.4C227.4,455.2 230.4,446 231.8,443.3C233.2,440.6 238.6,432.4 240.3,430.6C242,428.7 247.2,425.6 248.8,424.9C250.3,424.2 254.7,425.3 255.8,423.5C257,421.7 259.1,411.1 260.1,406.5C261.1,402 264.6,383.6 265.7,378.3C266.9,372.9 270.7,356.2 271.4,352.8C272.1,349.4 272.1,346.3 272.8,344.2C273.5,342 277.3,332.3 278.4,331.4C279.6,330.6 282.8,333.6 284.1,335.7C285.4,337.8 289.9,350 291.2,352.7C292.4,355.3 295.7,361.2 296.8,362.5C298,363.9 301.2,366.1 302.5,365.9C303.7,365.8 308.1,363 309.5,361.1C311,359.2 315.2,349.3 316.6,347C318,344.7 322.4,339 323.7,338C324.9,336.9 328.2,335.6 329.3,336.3C330.5,336.9 333.7,342 335,344.2C336.3,346.4 340.4,355.8 342,358.3C343.7,360.8 350.4,367.8 351.9,369.6C353.5,371.4 356.5,373.9 357.6,376.7C358.7,379.5 362.1,394.1 363.3,397.9C364.4,401.7 367.8,411.2 368.9,414.8C370,418.5 373.4,431.6 374.6,434.6C375.7,437.7 378.9,444 380.2,445.4C381.5,446.8 385.9,447.7 387.3,448.8C388.7,449.8 393.1,454.9 394.3,455.8C395.6,456.7 398.9,458.5 400,457.8C401.1,457.1 404.4,452.5 405.7,448.8C406.9,445 411.2,425.6 412.7,420.5C414.3,415.4 419.5,402.1 421.2,397.9C422.9,393.6 428,381.8 429.7,378.1C431.4,374.4 436.5,364.8 438.2,361.1C439.9,357.5 445.1,344.3 446.6,341.3C448.2,338.4 452.2,332.4 453.7,331.4C455.3,330.5 460.5,330.3 462.2,331.4C463.9,332.6 468.9,341.3 470.7,342.8C472.5,344.2 478.5,346.2 480,345.6C481.5,345 484.7,339.3 485.7,337C486.6,334.7 488.8,323.7 489.9,322.9C491,322 495.1,327.4 497,328.5C498.8,329.6 506,333.6 508.3,334.2C510.5,334.7 517.6,334.6 519.6,334.2C521.6,333.7 526.6,331.9 528.1,329.9C529.5,328 532.4,318.2 533.7,314.4C535,310.6 539.4,295.2 540.8,291.8C542.2,288.4 546.7,281.4 547.8,280.5C549,279.5 551.2,280.2 552.1,281.9C552.9,283.6 555.5,293.6 556.3,297.4C557.2,301.2 559.7,316.1 560.6,320C561.4,324 563.8,333.3 564.8,337C565.8,340.7 569.3,353.3 570.5,356.8C571.6,360.3 575,370.9 576.1,372.3C577.2,373.7 580.4,371.6 581.8,370.9C583.2,370.2 588.8,365 590.2,365.3C591.7,365.5 594.5,371.8 595.9,373.7C597.3,375.7 603,382.8 604.4,385.1C605.8,387.3 608.6,394.1 610,396.4C611.4,398.6 616.8,405.7 618.5,407.7C620.2,409.6 625.6,416.1 627,416.1C628.4,416.1 631.5,409.5 632.7,407.7C633.8,405.8 637,399.8 638.3,397.8C639.6,395.8 644,389.9 645.4,387.9C646.8,385.9 651.3,379.3 652.4,378C653.6,376.7 655.8,375.2 656.7,375.2C657.5,375.2 659.9,379 660.9,378C661.9,377 665.2,367.7 666.6,365.3C668,362.9 673.5,356.1 675.1,354C676.6,351.8 680.8,346 682.1,344.1C683.4,342.1 686.5,336 687.8,334.2C689,332.3 693.6,328 694.8,325.7C696.1,323.4 699.4,313.7 700.5,311.6C701.6,309.4 704.9,306 706.1,304.5C707.4,302.9 711.8,298.4 713.2,296C714.6,293.6 719,282.6 720.3,280.5C721.6,278.3 724.5,274.9 725.9,274.2C727.3,273.5 732.7,273.6 734.4,273.4C736.1,273.2 741.5,271.8 742.9,272C744.3,272.1 747.4,273.8 748.6,274.8C749.7,275.8 752.8,280.6 754.2,281.9C755.6,283.1 761.3,287.4 762.7,287.5C764.1,287.7 767.2,284.1 768.3,283.3C769.5,282.4 772.9,278.9 774,279C775.1,279.2 778.5,283 779.6,284.7C780.8,286.4 784.2,293.9 785.3,296C786.4,298.1 789.8,302.9 791,305.9C792.1,308.9 795.5,322 796.6,325.7C797.7,329.4 801.1,339.5 802.3,342.7C803.4,345.8 806.8,354.4 807.9,356.8C809,359.2 812.2,365.1 813.6,366.7C815,368.2 820.4,371.8 822,372.3C823.7,372.9 828.8,371.3 830.5,372.3C832.2,373.3 837.3,380.4 839,382.2C840.7,384.1 845.8,390 847.5,390.7C849.2,391.4 854.3,389.8 856,389.3C857.7,388.8 862.5,386.2 864.5,385.9C866.4,385.6 874.1,386 875.8,386.5C877.5,386.9 880.3,388.9 881.4,390.7C882.5,392.5 885.9,401.4 887.1,404.8C888.2,408.2 891.6,420.4 892.7,424.6C893.9,428.9 897.4,443.7 898.4,447.2C899.4,450.8 902,457.8 902.6,460C903.2,462.1 903.3,466.2 904,468.7C904.7,471.3 908.6,482.9 909.7,485.7C910.8,488.5 914.2,495.8 915.3,497C916.5,498.2 919.9,497.6 921,497.6C922.1,497.6 925.5,496.3 926.6,497C927.8,497.6 931,503.4 932.3,504.1C933.6,504.7 938,502.8 939.4,503.2C940.8,503.6 945.2,507.4 946.4,507.7C947.7,508.1 950.7,507.8 952.1,506.9C953.4,506 958.8,498.6 960,498.4C961.2,498.3 963.1,504.8 964.2,505.5C965.4,506.2 970,506 971.3,505.5C972.6,504.9 975.8,501.8 977,499.8C978.1,497.8 981.5,489.4 982.6,485.7C983.7,482 986.9,467 988.3,463.1C989.7,459.1 995.1,449.4 996.7,446.1C998.4,442.9 1003.8,434.5 1005.2,430.6C1006.6,426.6 1009.6,410.6 1010.9,406.5C1012.2,402.4 1016.7,392.5 1018,389.6C1019.2,386.6 1022.3,377.8 1023.6,376.9C1024.9,375.9 1028.8,379 1030.7,379.7C1032.5,380.4 1040.3,384.6 1042,383.9C1043.7,383.2 1046.1,376 1047.6,372.6C1049.2,369.2 1056.1,353.3 1057.5,350C1058.9,346.7 1060.8,341.4 1061.8,339.8C1062.8,338.2 1065.7,334.9 1067.4,334.2C1069.1,333.5 1076.7,333.9 1078.7,332.8C1080.7,331.6 1085.5,325 1087.2,322.9C1088.9,320.7 1094.3,314 1095.7,311.6C1097.1,309.2 1100.2,301.7 1101.3,298.8C1102.5,296 1105.3,284.9 1107,283.3C1108.7,281.7 1116.7,282.2 1118.3,282.7C1119.9,283.3 1121.6,287.5 1122.5,288.9C1123.5,290.4 1126.9,297.4 1128.2,297.4C1129.5,297.4 1133.7,291.2 1135.3,288.9C1136.8,286.7 1142.3,276.9 1143.7,274.8C1145.2,272.7 1148.3,268 1149.4,267.7C1150.5,267.5 1153.9,269.9 1155.1,272C1156.2,274.1 1159.6,285.8 1160.7,288.9C1161.8,292 1165.2,300.2 1166.4,303.1C1167.5,305.9 1170.9,314.8 1172,317.2C1173.1,319.6 1176.5,326 1177.7,327.1C1178.8,328.2 1182.2,328.9 1183.3,328.5C1184.5,328.1 1187.6,324.8 1189,322.9C1190.4,320.9 1195.8,312.1 1197.5,308.7C1199.2,305.3 1204.4,291.5 1205.9,288.9C1207.5,286.4 1211.9,283.9 1213,283.3C1214.1,282.7 1216.3,281.9 1217.2,283.3C1218.2,284.7 1221.8,295.6 1222.9,297.4C1224,299.3 1226.9,300.8 1228.6,301.7C1230.2,302.5 1237.9,307.3 1239.9,305.9C1241.8,304.5 1246.6,289.1 1248.3,287.5C1250,286 1255.3,289.8 1256.8,290.4C1258.4,290.9 1262.5,292 1263.9,293.2C1265.3,294.3 1269.4,300.4 1271,301.7C1272.5,302.9 1277.6,305.3 1279.4,305.9C1281.3,306.6 1287.6,308.6 1289.3,308.2C1291,307.7 1294.8,303.2 1296.4,301.7C1298,300.2 1303.2,294.9 1304.9,293.2C1306.6,291.5 1312.1,285.9 1313.4,284.7C1314.6,283.5 1316.6,280.9 1317.6,281.3C1318.6,281.7 1322.3,287.3 1323.3,288.9C1324.2,290.6 1326.5,297.1 1327.5,297.4C1328.5,297.7 1332.1,293.5 1333.1,291.8C1334.2,290 1336.5,283.3 1337.7,280C1338.9,276.6 1344,261.6 1345.2,258.3C1346.5,255 1349.4,246.8 1350.5,246.6C1351.6,246.4 1355.3,254.1 1356.5,256.4C1357.8,258.7 1362,267.6 1363.1,269.6C1364.2,271.6 1366.6,276.2 1367.5,276.2C1368.3,276.2 1370.8,272.2 1371.6,269.6C1372.4,267.1 1374.4,254.5 1375.4,250.8C1376.3,247 1379.9,234.9 1381,231.9C1382.2,228.9 1385.6,222.3 1386.7,220.6C1387.8,219 1390.8,215.2 1391.8,215.3C1392.7,215.5 1395.1,221 1396.1,222.5C1397.1,224 1400.8,229.2 1401.8,230C1402.7,230.9 1404.7,230 1405.5,231C1406.4,231.9 1409.3,237.7 1410.3,239.5C1411.2,241.3 1414,246.8 1415,248.9C1415.9,251 1418.7,257.6 1419.7,260.2C1420.6,262.8 1423.6,273.2 1424.4,275.3C1425.1,277.3 1426.5,279.7 1427.1,280.5C1427.8,281.3 1429.8,283 1430.9,283.3C1432,283.7 1437.3,284.1 1438.4,283.7C1439.6,283.3 1441.4,279.7 1442.2,279.6C1442.9,279.4 1445.2,281.1 1446,282.4C1446.7,283.7 1448.9,290.2 1449.7,292.8C1450.6,295.3 1453.6,305 1454.4,307.8C1455.3,310.7 1457.6,318.4 1458.2,321C1458.9,323.7 1460.4,331.6 1461,334.2C1461.7,336.9 1464.1,345.4 1464.8,347.4C1465.6,349.5 1467.8,353.9 1468.6,355C1469.3,356 1471.4,357.5 1472.3,357.8C1473.3,358.1 1477,357.7 1478,357.8C1479,357.9 1481.9,359.2 1482.7,359.1C1483.6,359 1485.8,357.5 1486.5,356.8C1487.1,356.2 1488.7,353.3 1489.3,352.1C1489.9,351 1492.4,346.2 1492.7,345.5" fill="none" stroke="#000" stroke-width="2.1" stroke-linejoin="round"/><ellipse cx="1221.5" cy="366.5" rx="3.2" ry="7" fill="none" stroke="#c4c4c8" stroke-width="1"/><path d="M149.3,286.2L1448,167.8" stroke="#000" stroke-width="2.6"/><path d="M112.5,475.8L1360,568" stroke="#000" stroke-width="2.3"/><path d="M1487.4,290H1498.2V301H1503.8L1492.6,313.5L1481,301H1487.4Z" fill="url(#garrow)" stroke="#2c8808" stroke-width="0.8"/></g><rect x="1437" y="150" width="112" height="18" fill="url(#lbl)"/><text x="1493" y="164.8" text-anchor="middle" font-size="15.4px" class="lb" textLength="101" lengthAdjust="spacingAndGlyphs">False Break</text><rect x="1511.5" y="299.5" width="112.0" height="17.5" fill="url(#lbl)"/><text x="1567.5" y="313.9" text-anchor="middle" font-size="15.4px" class="lb" textLength="101" lengthAdjust="spacingAndGlyphs">Megaphone</text><rect x="186.3" y="248.2" width="21.399999999999977" height="18.0" fill="url(#lbl)"/><text x="197" y="263.1" text-anchor="middle" font-size="16px" class="lb" textLength="12.6" lengthAdjust="spacingAndGlyphs">iii</text><rect x="922" y="576" width="24" height="18" fill="url(#lbl)"/><text x="934" y="590.9" text-anchor="middle" font-size="16.4px" class="lb" textLength="14.6" lengthAdjust="spacingAndGlyphs">iv</text><defs><linearGradient id="gstop" x1="0" y1="0" x2="0" y2="1"><stop offset="0" stop-color="#ff8a8a"/><stop offset="1" stop-color="#f06060"/></linearGradient><linearGradient id="gshort" x1="0" y1="0" x2="0" y2="1"><stop offset="0" stop-color="#e8f2d4"/><stop offset="1" stop-color="#cfdfbc"/></linearGradient><linearGradient id="glimit" x1="0" y1="0" x2="0" y2="1"><stop offset="0" stop-color="#ecd6f4"/><stop offset="1" stop-color="#dcbce8"/></linearGradient></defs><rect x="29" y="252" width="45" height="20" fill="#c8c8c8" opacity="0.7"/><rect x="28" y="251" width="45" height="20" fill="url(#gstop)"/><rect x="28" y="251" width="10" height="20" fill="#3c7cc4"/><rect x="28" y="251" width="10" height="1.8" fill="#283c88"/><text x="43.4" y="266" font-size="11px" fill="#d85050" textLength="25" lengthAdjust="spacingAndGlyphs">Stop</text><path d="M28.5,271V276" stroke="#f06060" stroke-width="1"/><circle cx="28" cy="278" r="1.9" fill="#fff" stroke="#f05050" stroke-width="1"/><rect x="29" y="302" width="156" height="18" fill="#c8c8c8" opacity="0.7"/><rect x="28" y="301" width="156" height="18" fill="url(#gshort)"/><rect x="28" y="301" width="10" height="18" fill="#3c7cc4"/><text x="43.4" y="313.9" font-size="11px" fill="#9cb068" textLength="135.8" lengthAdjust="spacingAndGlyphs">Short(11/06 21:32, 1.3)</text><path d="M28.5,319V325" stroke="#b8d498" stroke-width="1"/><circle cx="28" cy="327.3" r="1.9" fill="#fff" stroke="#b8d498" stroke-width="1"/><rect x="29" y="457" width="46.5" height="18.5" fill="#c8c8c8" opacity="0.7"/><rect x="28" y="456" width="46.5" height="18.5" fill="url(#glimit)"/><rect x="28" y="456" width="10" height="18.5" fill="#3c7cc4"/><text x="43.4" y="469.3" font-size="11px" fill="#b88cd0" textLength="27.5" lengthAdjust="spacingAndGlyphs">Limit</text><path d="M28.5,474.5V479.5" stroke="#d8b8e8" stroke-width="1"/><circle cx="28" cy="481.5" r="1.9" fill="#fff" stroke="#d8b8e8" stroke-width="1"/><rect x="18" y="83" width="234" height="29.7" fill="#e8e8ec"/><text x="19.5" y="106" font-size="15px" fill="#2c2c6c">S</text><text x="37.5" y="106" font-size="11.5px" font-weight="bold" fill="#000" textLength="20" lengthAdjust="spacingAndGlyphs">113</text><text x="65" y="106" font-size="22px" font-weight="bold" fill="#000" textLength="28" lengthAdjust="spacingAndGlyphs">86</text><text x="97.5" y="97.7" font-size="11.5px" font-weight="bold" fill="#000">9</text><rect x="110.5" y="88.5" width="49" height="18.5" fill="#fff" stroke="#dcdce0" stroke-width="1"/><text x="113" y="102" font-size="11px" fill="#c8c8c8">1</text><path d="M151.5,97 h3.6 l-1.8,2 z" fill="#d0d0d0"/><text x="166.3" y="106" font-size="11.5px" font-weight="bold" fill="#000" textLength="20" lengthAdjust="spacingAndGlyphs">113</text><text x="193.8" y="106" font-size="22px" font-weight="bold" fill="#000" textLength="28" lengthAdjust="spacingAndGlyphs">88</text><text x="226" y="97.7" font-size="11.5px" font-weight="bold" fill="#000">1</text><text x="239.5" y="106" font-size="15px" fill="#2c2c6c">B</text><text x="18" y="124.8" font-size="11px" fill="#40406c" textLength="90.4" lengthAdjust="spacingAndGlyphs">[Template: huy]</text><text x="18" y="137.8" font-size="11px" fill="#ff8420" textLength="189.5" lengthAdjust="spacingAndGlyphs">MVA(USD/JPY.Close,200): 113.83</text><text x="18" y="150.8" font-size="11px" fill="#0c7c0c" textLength="189.5" lengthAdjust="spacingAndGlyphs">MVA(USD/JPY.Close,120): 113.92</text><text x="18" y="163.8" font-size="11px" fill="#1c1cff" textLength="183" lengthAdjust="spacingAndGlyphs">MVA(USD/JPY.Close,50): 114.07</text><text x="18" y="176.8" font-size="11px" fill="#ff1c1c" textLength="183" lengthAdjust="spacingAndGlyphs">MVA(USD/JPY.Close,20): 113.95</text><text x="18" y="189.8" font-size="11px" fill="#000" textLength="175.5" lengthAdjust="spacingAndGlyphs">MVA(USD/JPY.Close,5): 113.81</text><text x="17.5" y="202.8" font-size="11px" fill="#e0541c" textLength="145" lengthAdjust="spacingAndGlyphs">BB(USD/JPY.Close, 20, 2)</text><text x="173" y="202.8" font-size="11px" fill="#e0541c" textLength="67.3" lengthAdjust="spacingAndGlyphs">TL: 114.298</text><text x="249.3" y="202.8" font-size="11px" fill="#e0541c" textLength="68" lengthAdjust="spacingAndGlyphs">BL: 113.596</text><text x="326" y="202.8" font-size="11px" fill="#e0541c" textLength="17.3" lengthAdjust="spacingAndGlyphs">AL:</text><text x="349.3" y="202.8" font-size="11px" fill="#f02020" textLength="45" lengthAdjust="spacingAndGlyphs">113.947</text><g clip-path="url(#cmacd)"><path d="M349.5,667V806M354.5,667V806" stroke="#d4d4d4" stroke-width="1" stroke-dasharray="3,3"/><path d="M10,727.3h3.6V746.5h-3.6zM15,732.8h3.6V746.5h-3.6zM19,737h3.6V746.5h-3.6zM24,742.1h3.6V746.5h-3.6zM28,745.2h3.6V746.5h-3.6zM33,746.5h3.6V747.4h-3.6zM38,746.5h3.6V748.4h-3.6zM42,746.5h3.6V748.2h-3.6zM47,746.5h3.6V748.6h-3.6zM51,746.5h3.6V750.8h-3.6zM56,746.5h3.6V752h-3.6zM61,746.5h3.6V752h-3.6zM65,746.5h3.6V753.2h-3.6zM70,746.5h3.6V754h-3.6zM74,746.5h3.6V754h-3.6zM79,746.5h3.6V753.3h-3.6zM84,746.5h3.6V759.3h-3.6zM88,746.5h3.6V764.9h-3.6zM93,746.5h3.6V766.4h-3.6zM97,746.5h3.6V770.7h-3.6zM102,746.5h3.6V773.2h-3.6zM107,746.5h3.6V773.2h-3.6zM111,746.5h3.6V773.2h-3.6zM116,746.5h3.6V770.3h-3.6zM120,746.5h3.6V765.1h-3.6zM125,746.5h3.6V760h-3.6zM130,746.5h3.6V756h-3.6zM134,746.5h3.6V750.6h-3.6zM139,746.5h3.6V747.8h-3.6zM148,745.3h3.6V746.5h-3.6zM153,744h3.6V746.5h-3.6zM157,741.6h3.6V746.5h-3.6zM162,739.8h3.6V746.5h-3.6zM166,728.4h3.6V746.5h-3.6zM171,720.6h3.6V746.5h-3.6zM176,717.3h3.6V746.5h-3.6zM180,715.8h3.6V746.5h-3.6zM185,718.2h3.6V746.5h-3.6zM189,720.2h3.6V746.5h-3.6zM194,721.5h3.6V746.5h-3.6zM199,723.2h3.6V746.5h-3.6zM203,727.2h3.6V746.5h-3.6zM208,732.9h3.6V746.5h-3.6zM212,739.7h3.6V746.5h-3.6zM217,742.7h3.6V746.5h-3.6zM222,740.3h3.6V746.5h-3.6zM226,741h3.6V746.5h-3.6zM231,741.5h3.6V746.5h-3.6zM235,743.6h3.6V746.5h-3.6zM240,745.2h3.6V746.5h-3.6zM245,744.5h3.6V746.5h-3.6zM249,745.6h3.6V746.5h-3.6zM258,741.3h3.6V746.5h-3.6zM263,736.9h3.6V746.5h-3.6zM268,731.6h3.6V746.5h-3.6zM272,733.5h3.6V746.5h-3.6zM277,737.3h3.6V746.5h-3.6zM281,741.7h3.6V746.5h-3.6zM291,746.5h3.6V750.2h-3.6zM295,746.5h3.6V755.4h-3.6zM300,746.5h3.6V757.8h-3.6zM304,746.5h3.6V757.7h-3.6zM309,746.5h3.6V756.5h-3.6zM314,746.5h3.6V753h-3.6zM318,746.5h3.6V750.8h-3.6zM323,746.5h3.6V751.5h-3.6zM327,746.5h3.6V752.3h-3.6zM332,746.5h3.6V755h-3.6zM337,746.5h3.6V757.4h-3.6zM341,746.5h3.6V759.2h-3.6zM346,746.5h3.6V760.6h-3.6zM350,746.5h3.6V759.6h-3.6zM355,746.5h3.6V759.3h-3.6zM360,746.5h3.6V765.6h-3.6zM364,746.5h3.6V767.7h-3.6zM369,746.5h3.6V767.3h-3.6zM373,746.5h3.6V767.8h-3.6zM378,746.5h3.6V767.8h-3.6zM383,746.5h3.6V767.4h-3.6zM387,746.5h3.6V764.7h-3.6zM392,746.5h3.6V761.1h-3.6zM396,746.5h3.6V757.9h-3.6zM401,746.5h3.6V753.8h-3.6zM406,746.5h3.6V748.2h-3.6zM410,742.5h3.6V746.5h-3.6zM415,737h3.6V746.5h-3.6zM419,733.4h3.6V746.5h-3.6zM424,732.2h3.6V746.5h-3.6zM429,729.1h3.6V746.5h-3.6zM433,726.4h3.6V746.5h-3.6zM438,726.1h3.6V746.5h-3.6zM442,727.6h3.6V746.5h-3.6zM447,727.6h3.6V746.5h-3.6zM452,729.5h3.6V746.5h-3.6zM456,732.3h3.6V746.5h-3.6zM461,736.9h3.6V746.5h-3.6zM465,744.5h3.6V746.5h-3.6zM475,745.5h3.6V746.5h-3.6zM479,745.1h3.6V746.5h-3.6zM484,744.5h3.6V746.5h-3.6zM488,744.6h3.6V746.5h-3.6zM498,746.5h3.6V748.5h-3.6zM502,746.5h3.6V748.2h-3.6zM507,746.5h3.6V747.9h-3.6zM511,746.5h3.6V748.2h-3.6zM516,746.5h3.6V751h-3.6zM521,746.5h3.6V751h-3.6zM525,746.5h3.6V749.6h-3.6zM530,744.1h3.6V746.5h-3.6zM534,739.1h3.6V746.5h-3.6zM539,737.4h3.6V746.5h-3.6zM544,738.7h3.6V746.5h-3.6zM548,739.4h3.6V746.5h-3.6zM553,745.1h3.6V746.5h-3.6zM557,746.5h3.6V754.6h-3.6zM562,746.5h3.6V760.3h-3.6zM567,746.5h3.6V765.6h-3.6zM571,746.5h3.6V764.7h-3.6zM576,746.5h3.6V763.7h-3.6zM580,746.5h3.6V762.1h-3.6zM585,746.5h3.6V760.3h-3.6zM590,746.5h3.6V758.6h-3.6zM594,746.5h3.6V757.2h-3.6zM599,746.5h3.6V756.3h-3.6zM603,746.5h3.6V756.3h-3.6zM608,746.5h3.6V756.8h-3.6zM613,746.5h3.6V755.8h-3.6zM617,746.5h3.6V754.7h-3.6zM622,746.5h3.6V754h-3.6zM626,746.5h3.6V753.6h-3.6zM631,746.5h3.6V748.1h-3.6zM636,742.1h3.6V746.5h-3.6zM640,740.4h3.6V746.5h-3.6zM645,738.8h3.6V746.5h-3.6zM649,738.5h3.6V746.5h-3.6zM654,736.7h3.6V746.5h-3.6zM659,737.4h3.6V746.5h-3.6zM663,734h3.6V746.5h-3.6zM668,731.7h3.6V746.5h-3.6zM672,734.7h3.6V746.5h-3.6zM677,736.5h3.6V746.5h-3.6zM682,733.6h3.6V746.5h-3.6zM686,732.1h3.6V746.5h-3.6zM691,732.8h3.6V746.5h-3.6zM695,733.5h3.6V746.5h-3.6zM700,734.4h3.6V746.5h-3.6zM705,733.5h3.6V746.5h-3.6zM709,732.8h3.6V746.5h-3.6zM714,733.4h3.6V746.5h-3.6zM718,734.3h3.6V746.5h-3.6zM723,736.4h3.6V746.5h-3.6zM728,739.1h3.6V746.5h-3.6zM732,741.1h3.6V746.5h-3.6zM737,743.4h3.6V746.5h-3.6zM741,744.4h3.6V746.5h-3.6zM751,746.5h3.6V749.4h-3.6zM755,746.5h3.6V752.4h-3.6zM760,746.5h3.6V753.8h-3.6zM764,746.5h3.6V752h-3.6zM769,746.5h3.6V749.3h-3.6zM774,746.5h3.6V750h-3.6zM778,746.5h3.6V756h-3.6zM783,746.5h3.6V758.3h-3.6zM787,746.5h3.6V758.9h-3.6zM792,746.5h3.6V760.3h-3.6zM797,746.5h3.6V761.9h-3.6zM801,746.5h3.6V764.1h-3.6zM806,746.5h3.6V766.5h-3.6zM810,746.5h3.6V764.1h-3.6zM815,746.5h3.6V762.3h-3.6zM820,746.5h3.6V759h-3.6zM824,746.5h3.6V757.8h-3.6zM829,746.5h3.6V755.6h-3.6zM833,746.5h3.6V754h-3.6zM838,746.5h3.6V753.3h-3.6zM843,746.5h3.6V752.1h-3.6zM847,746.5h3.6V750.8h-3.6zM852,746.5h3.6V747.8h-3.6zM856,745.5h3.6V746.5h-3.6zM861,745.2h3.6V746.5h-3.6zM866,744.5h3.6V746.5h-3.6zM870,744h3.6V746.5h-3.6zM875,742.9h3.6V746.5h-3.6zM879,742h3.6V746.5h-3.6zM889,746.5h3.6V748.9h-3.6zM893,746.5h3.6V754h-3.6zM898,746.5h3.6V759h-3.6zM902,746.5h3.6V761.5h-3.6zM907,746.5h3.6V762h-3.6zM912,746.5h3.6V761.5h-3.6zM916,746.5h3.6V758.2h-3.6zM921,746.5h3.6V755.2h-3.6zM925,746.5h3.6V752.2h-3.6zM930,746.5h3.6V750.6h-3.6zM935,746.5h3.6V747.7h-3.6zM939,744.7h3.6V746.5h-3.6zM944,742.8h3.6V746.5h-3.6zM948,740.9h3.6V746.5h-3.6zM953,738.6h3.6V746.5h-3.6zM958,737.8h3.6V746.5h-3.6zM962,739.8h3.6V746.5h-3.6zM967,739.7h3.6V746.5h-3.6zM971,738h3.6V746.5h-3.6zM976,735.7h3.6V746.5h-3.6zM981,732.5h3.6V746.5h-3.6zM985,729.8h3.6V746.5h-3.6zM990,727.5h3.6V746.5h-3.6zM994,725.7h3.6V746.5h-3.6zM999,725.2h3.6V746.5h-3.6zM1004,723.3h3.6V746.5h-3.6zM1008,720.9h3.6V746.5h-3.6zM1013,721.1h3.6V746.5h-3.6zM1017,721.9h3.6V746.5h-3.6zM1022,723.9h3.6V746.5h-3.6zM1027,729.7h3.6V746.5h-3.6zM1031,733h3.6V746.5h-3.6zM1036,736.2h3.6V746.5h-3.6zM1040,740h3.6V746.5h-3.6zM1045,738.5h3.6V746.5h-3.6zM1050,736.5h3.6V746.5h-3.6zM1054,736.4h3.6V746.5h-3.6zM1059,737.5h3.6V746.5h-3.6zM1063,739.1h3.6V746.5h-3.6zM1068,739.5h3.6V746.5h-3.6zM1073,742.2h3.6V746.5h-3.6zM1077,743.4h3.6V746.5h-3.6zM1082,744.2h3.6V746.5h-3.6zM1086,744.5h3.6V746.5h-3.6zM1091,744.5h3.6V746.5h-3.6zM1096,743.8h3.6V746.5h-3.6zM1100,741.8h3.6V746.5h-3.6zM1105,739h3.6V746.5h-3.6zM1109,743.4h3.6V746.5h-3.6zM1119,746.5h3.6V748.2h-3.6zM1123,746.5h3.6V752.8h-3.6zM1128,746.5h3.6V750.5h-3.6zM1132,746.5h3.6V749.6h-3.6zM1137,746.5h3.6V748.7h-3.6zM1142,746.5h3.6V749h-3.6zM1146,746.5h3.6V748.6h-3.6zM1151,746.5h3.6V747.8h-3.6zM1155,746.5h3.6V751.3h-3.6zM1160,746.5h3.6V756.9h-3.6zM1165,746.5h3.6V760.3h-3.6zM1169,746.5h3.6V762.6h-3.6zM1174,746.5h3.6V762.8h-3.6zM1178,746.5h3.6V762.2h-3.6zM1183,746.5h3.6V761.1h-3.6zM1188,746.5h3.6V757.5h-3.6zM1192,746.5h3.6V753h-3.6zM1197,746.5h3.6V748.6h-3.6zM1201,745.6h3.6V746.5h-3.6zM1206,742.6h3.6V746.5h-3.6zM1211,742h3.6V746.5h-3.6zM1215,741.1h3.6V746.5h-3.6zM1224,746.5h3.6V751h-3.6zM1229,746.5h3.6V748h-3.6zM1238,746.5h3.6V747.8h-3.6zM1243,746.5h3.6V747.8h-3.6zM1252,745.2h3.6V746.5h-3.6zM1257,745.2h3.6V746.5h-3.6zM1266,746.5h3.6V748.5h-3.6zM1270,746.5h3.6V750.9h-3.6zM1275,746.5h3.6V750.1h-3.6zM1280,746.5h3.6V749h-3.6zM1284,746.5h3.6V749h-3.6zM1289,746.5h3.6V748.6h-3.6zM1293,746.5h3.6V747.7h-3.6zM1298,745.8h3.6V746.5h-3.6zM1303,744.6h3.6V746.5h-3.6zM1307,742.8h3.6V746.5h-3.6zM1312,742.8h3.6V746.5h-3.6zM1316,742.8h3.6V746.5h-3.6zM1321,745.5h3.6V746.5h-3.6zM1326,746.5h3.6V748.9h-3.6zM1330,744.5h3.6V746.5h-3.6zM1335,740.8h3.6V746.5h-3.6zM1339,738.5h3.6V746.5h-3.6zM1344,737.1h3.6V746.5h-3.6zM1349,737.3h3.6V746.5h-3.6zM1353,741h3.6V746.5h-3.6zM1358,744.9h3.6V746.5h-3.6zM1367,746.5h3.6V747.7h-3.6zM1372,743.8h3.6V746.5h-3.6zM1376,737.1h3.6V746.5h-3.6zM1381,737.4h3.6V746.5h-3.6zM1385,738.4h3.6V746.5h-3.6zM1390,741.4h3.6V746.5h-3.6zM1395,743.5h3.6V746.5h-3.6zM1399,743.9h3.6V746.5h-3.6zM1408,746.5h3.6V752.2h-3.6zM1413,746.5h3.6V756h-3.6zM1418,746.5h3.6V759.2h-3.6zM1422,746.5h3.6V760.2h-3.6zM1427,746.5h3.6V759.5h-3.6zM1431,746.5h3.6V758.7h-3.6zM1436,746.5h3.6V756.9h-3.6zM1441,746.5h3.6V755.3h-3.6zM1445,746.5h3.6V758.1h-3.6zM1450,746.5h3.6V760.4h-3.6zM1454,746.5h3.6V762.2h-3.6zM1459,746.5h3.6V762.8h-3.6zM1464,746.5h3.6V762.8h-3.6zM1468,746.5h3.6V762.1h-3.6zM1473,746.5h3.6V759.7h-3.6zM1477,746.5h3.6V756.6h-3.6zM1482,746.5h3.6V752.4h-3.6zM1487,746.5h3.6V747.2h-3.6zM1491,744.5h3.6V746.5h-3.6z" fill="#000"/><path d="M10,746.5H1839" stroke="#000" stroke-width="1.4"/><path d="M8.8,707.5L17.5,697.5L27.5,691.2L37.5,689.2L50,689.5L65,695L80,699.5L90,707.5L100,717.5L110,728.8L120,742.5L130,753.8L140,759.5L150,762.5L160,762.5L167.5,759.5L175,752.5L185,742.5L195,728.8L205,713.8L215,703.8L225,698.8L235,695.5L245,694.2L255,693.8L265,690.5L275,686.2L285,683L292.5,681.2L302.5,681.8L312.5,686.2L325,693L337.5,700L350,706.2L360,713.8L370,723.8L380,735L390,746.2L397.5,755L405,760.8L412.5,763.2L422.5,762.5L430,760L440,751.2L450,740L460,730L470,724.5L479.8,722L490,720.8L500,722L510,723L520,724.5L530,725.5L540,724.5L550,722.5L560,722.5L570,727L580,735L590,743.8L600,751.2L610,757L620,762L630,767L640,768.8L647.5,768.2L657.5,765L667.5,760L677.5,753.8L687.5,747.5L697.5,740L707.5,732.5L717.5,725.5L727.5,720L737.5,716.2L747.5,713.8L757.5,714.5L767.5,718L777.5,720.5L787.5,726.2L800,733.8L812.5,745L822.5,753.8L832.5,761.2L842.5,767.5L852.5,770.5L862.5,772L872.5,772.5L882.5,771.2L892.5,772.5L902.5,776.2L912.5,782.5L922.5,788.8L932.5,795L940,797L950,797L959.8,795L967.5,792.5L975,788L985,781.2L997.5,773.8L1007.5,762.5L1017.5,747.5L1027.5,736.2L1037.5,726.2L1047.5,720L1060,714.5L1072.5,710L1085,707L1097.5,704.5L1110,702L1120,701.2L1130,702.5L1140,703.8L1150,707L1160,710L1170,715L1180,723.8L1190,730L1200,734.5L1210,736.2L1222.5,736.2L1235,736.2L1247.5,737.5L1260,738.8L1272.5,740.5L1285,742.5L1297.5,743.8L1310,743L1322.5,742L1332.5,741.2L1342.5,738.8L1352.5,736.2L1362.5,734.5L1372.5,732.5L1379.8,731L1392.5,727.5L1405,725L1415,724.5L1425,729.5L1437.5,737.5L1450,747.5L1462.5,758.8L1475,767.5L1485,773.8L1491.8,775.5" fill="none" stroke="#1818f0" stroke-width="1.1" stroke-linejoin="round"/><path d="M8.8,685L25,688.8L37.5,692L47.5,692L57.5,697.5L70,703.8L80,707L87.5,720L97.5,735L105,750L112.5,758.8L120,763L130,764.5L136.2,761.2L147.5,762.5L155,761.2L163.8,754.5L170,737.5L177.5,720L185,713.8L192.5,706.2L200,697.5L207.5,694.5L215,698.8L222.5,693.8L232.5,691.5L242.5,692.5L252.5,692.5L260,687.5L267.5,678.8L277.5,675.5L287.5,681.2L297.5,690L307.5,695.5L317.5,695L327.5,700L335,707.5L342.5,715L350,721.2L355,723L360,732.5L367.5,742.5L377.5,755L387.5,765L397.5,769.5L402.5,769L410,762.5L417.5,753.8L425,746.2L435,735L442.5,727.5L450,721.2L457.5,718.2L462.5,718L468.8,724.5L475,722L479.8,721.2L490,718.8L495,722.5L502.5,725.5L510,724.5L517.5,727.5L526.2,728.8L532.5,722.5L540,717L550,716.5L555,721.2L562.5,735L570,746.2L580,751.2L590,756.2L600,762.5L610,768.8L620,772L627.5,773.8L632.5,770L637.5,764.5L645,761.2L652.5,760L660,755L667.5,750L672.5,744.5L680,743.8L687.5,735L697.5,727.5L707.5,720L717.5,714.5L725,712.5L735,712.5L742.5,712.5L750,716.2L760,723L767.5,722.5L773.8,722L780,731.2L787.5,738L795,743.8L802.5,756.2L812.5,763.8L822.5,767L832.5,770L842.5,774.5L850,774L857.5,772.5L865,770L872.5,771.2L880,768.8L887.5,772.5L895,782.5L900,788.8L907.5,793.8L913.8,798L920,798.2L927.5,797.5L932.5,800L937.5,796.2L945,795L952.5,788.8L959.8,786.2L966.2,787L972.5,782.5L980,771.2L987.5,761.2L995,753.8L1002.5,745L1010,731.2L1017.5,722.5L1025,718.8L1035,718L1042.5,718L1047.5,712.5L1055,707.5L1062.5,706.2L1070,704.5L1075,706.2L1082.5,705.5L1090,703.8L1097.5,702.5L1102.5,699.5L1106.8,695.5L1112.5,700L1120,705L1125,709.5L1130,706.2L1135,707L1142.5,708L1150,708.2L1155,711.2L1160,720L1167.5,727.5L1175,733.8L1180,738L1185,741.2L1192.5,738.8L1200,737L1207.5,733.8L1217.5,732.5L1221.2,737.5L1226.2,742L1232.5,738.8L1240,738.2L1247.5,738L1255,738L1262.5,740.5L1270,743.8L1277.5,744.5L1285,745L1292.5,746.2L1300,743.8L1307.5,740L1315,739L1322.5,741.2L1327.5,746.2L1332.5,740.5L1340,732.5L1345,728.8L1352.5,728.8L1357.5,731.2L1362.5,735.5L1370,735L1375,727.5L1380,721.2L1387.5,720L1395,724.5L1402.5,723.2L1410,728.8L1417.5,737.5L1425,745L1432.5,747.5L1440,748.8L1447.5,756.2L1455,766.2L1462.5,773.8L1470,778.8L1477.5,780.5L1483.8,780.5L1488.8,776.2L1491.8,774.5" fill="none" stroke="#f01818" stroke-width="1.1" stroke-linejoin="round"/><path d="M135,701L351,743" stroke="#f01818" stroke-width="1.1"/><path d="M788.7,773.7L991,758.2" stroke="#1818f0" stroke-width="1.3"/><path d="M1013.7,712.5L1072.5,745" stroke="#1818f0" stroke-width="1.3"/><path d="M1110,701.2L1495,744.5" stroke="#1818f0" stroke-width="1.3"/></g><text x="17" y="678" font-size="11px" fill="#ff2020" xml:space="preserve" textLength="277.5" lengthAdjust="spacingAndGlyphs">MACD(USD/JPY.Close, 12, 26, 9)  MACD: -0.094</text><text x="303" y="678" font-size="11px" fill="#2020ff" textLength="90" lengthAdjust="spacingAndGlyphs">SIGNAL: -0.099</text><text x="401" y="678" font-size="11px" fill="#000" textLength="112" lengthAdjust="spacingAndGlyphs">HISTOGRAM: 0.005</text><rect x="1456" y="716.7" width="112" height="17.0" fill="url(#lbl)"/><text x="1512" y="730.7" text-anchor="middle" font-size="15.4px" class="lb" textLength="100.5" lengthAdjust="spacingAndGlyphs">Phan ky am</text><path d="M1854.5,671V805.5H1848M1854,671.5H1840M1854,678.5H1851M1854,686.5H1851M1854,694.5H1851M1854,701.5H1851M1854,708.5H1847M1854,716.5H1851M1854,724.5H1851M1854,731.5H1851M1854,738.5H1851M1854,746.5H1840M1854,754.5H1851M1854,761.5H1851M1854,768.5H1851M1854,776.5H1851M1854,784.5H1847M1854,791.5H1851M1854,798.5H1851" stroke="#383838" stroke-width="1" fill="none"/><text x="1858" y="676.3" class="ax" textLength="31.5" lengthAdjust="spacingAndGlyphs">0.250</text><text x="1858" y="750.8" class="ax" textLength="31.5" lengthAdjust="spacingAndGlyphs">0.000</text><g clip-path="url(#crsi)"><path d="M349.5,817V882M354.5,817V882" stroke="#d4d4d4" stroke-width="1" stroke-dasharray="3,3"/><path d="M10,820.5H1839M10,850.5H1839M10,879.5H1839" stroke="#000" stroke-width="1.2"/><path d="M10,838.4H1839M10,861.5H1839" stroke="#ff4848" stroke-width="1"/><path d="M20,850L1032.5,861" stroke="#0808f0" stroke-width="2"/><path d="M8.8,829.5L15,834.5L25,835.8L37.5,834.5L45,831.2L52.5,842L60,839.5L67.5,842L80,839.5L85,854.5L95,855L100,858L107.5,857L112.5,859.2L120,855L132.5,853.2L136.2,851.2L142.5,854L152.5,852.5L157.5,849.5L163.8,847.5L168.8,836.8L175,837.5L182.5,837L190,838.8L197.5,835.8L205,835.8L213.8,844.2L221.2,838.8L226.2,840L231.2,838.8L237.5,842.5L247.5,840.8L255,840L261.2,835L268.8,832.5L275,840L282.5,843.2L295,844.2L305,842.5L313.8,839.5L321.2,842.5L328.8,843.2L337.5,848.8L346.2,849.5L350,846.8L355,846.8L361.2,858.2L370,854L375,855.8L382.5,857L390,856.2L400,855.8L407.5,849.5L415,845L425,845.5L435,840.8L442.5,844.2L448.8,840.8L455,842.5L462.5,843.2L467.5,852L471.2,845.8L479.8,844.5L490,843.8L495,848L502.5,845.5L512.5,845.5L517.5,849.5L526.2,846.2L532.5,841.2L538.8,841.2L545,844.5L551.2,844.5L557.5,852.5L567.5,854.2L573.8,851.2L585,851.2L592.5,853.2L602.5,855L610,858L615,855L628.8,855L636.2,848L642.5,850.8L652.5,850.5L657.5,848.8L662.5,848.8L668.8,844.5L675,849.2L680,848.8L685,843.8L700,843.8L710,841.8L722.5,840.8L727.5,843L737.5,843L743.8,841.8L751.2,847.5L760,847.5L770,843L775,847L780,853.8L785,853.2L790,851.2L796.2,853.8L802.5,858L808.8,858L813.8,855L822.5,855L830,857L840,858L850,857L857.5,852.5L865,855.8L872.5,855.8L876.2,853.8L881.2,853.8L885,858.8L895,864.5L905,863.8L915,863.8L921.2,861.2L926.2,863L931.2,865L936.2,858.8L942.5,858.8L946.2,860L951.2,856.2L959.8,856.2L963.8,859.2L972.5,852.5L981.2,848L992.5,845.5L1001.2,843.8L1008.8,839.2L1022.5,839.2L1027.5,842.5L1041.2,842.5L1047.5,837L1053.8,837L1060,839.2L1065,839.2L1068.8,837.5L1075,840.8L1085,837.5L1095,837L1102.5,834.2L1106.2,834.2L1111.2,844.2L1120,843.8L1125,847.5L1130,842L1135,843.8L1152.5,843.8L1160,852L1167.5,850.8L1182.5,850.8L1190,847L1200,846.8L1207.5,844.5L1212.5,847L1217.5,847L1221.2,852.5L1226.2,852.5L1230,847L1240,849.5L1251.2,847L1257.5,849.5L1262.5,849.5L1270,852L1277.5,849.2L1295,849.5L1300,845.5L1308.8,845.5L1315,847.5L1320,848.8L1326.2,854.2L1332.5,843.8L1342.5,843L1350,846.2L1360,850.8L1367.5,847.5L1377.5,838.8L1380,842L1385,846.2L1395,848L1401.2,845.5L1410,850.5L1418.8,853.8L1427.5,851.2L1442.5,851.2L1450,857.5L1465,858L1470,860L1475,857L1483.8,856.8L1488.8,852.5L1492.5,852.5" fill="none" stroke="#000" stroke-width="1.8" stroke-linejoin="round"/></g><text x="17" y="828" font-size="11px" fill="#000" textLength="176.5" lengthAdjust="spacingAndGlyphs">RSI(USD/JPY.Close, 14): 44.74</text><path d="M1854.5,820V879.5H1840M1854,820.5H1849M1854,838.5H1849M1854,850.5H1849M1854,864.5H1849" stroke="#383838" stroke-width="1" fill="none"/><rect x="1857" y="815" width="21" height="12.5" fill="#989898"/><text x="1857.5" y="825.9" font-size="11px" fill="#000">100</text><rect x="1857" y="832.8" width="14" height="12.5" fill="#ff5050"/><text x="1857.5" y="843.6999999999999" font-size="11px" fill="#000">70</text><rect x="1857" y="845.3" width="14" height="12" fill="#989898"/><text x="1857.5" y="855.6999999999999" font-size="11px" fill="#000">50</text><rect x="1857" y="857" width="14" height="12" fill="#ff5050"/><text x="1857.5" y="867.4" font-size="11px" fill="#000">30</text><rect x="1857" y="874" width="7" height="10.5" fill="#989898"/><text x="1857.5" y="882.9" font-size="11px" fill="#000">0</text><g clip-path="url(#csto)"><path d="M349.5,892V944M354.5,892V944" stroke="#d4d4d4" stroke-width="1" stroke-dasharray="3,3"/><path d="M10,895.5H1839M10,941.7H1839" stroke="#000" stroke-width="1.2"/><path d="M10,904.4H1839M10,932.4H1839" stroke="#ff4848" stroke-width="1"/><path d="M8.8,897.5L17.5,905L27.5,910.5L36.2,913.2L42.5,907.5L48.8,905L57.5,918.8L65,918.8L72.5,918.8L80,915L87.5,925L95,934.2L103.8,935.5L112.5,933L120,931.2L127.5,927.5L135,915L142.5,910L152.5,911.2L160,903.8L167.5,899.5L175,899.5L185,902L195,901.2L205,901.2L212.5,910L218.8,917.5L225,912.5L231.2,903.8L237.5,906.2L247.5,906.2L255,902.5L265,900.8L271.2,900L277.5,903.8L287.5,916.2L297.5,922.5L306.2,927.5L312.5,922.5L320,911.2L325,909.5L332.5,915L340,927.5L346.2,932.5L350,932.5L356.2,926.2L365,930L375,928.2L382.5,932.5L390,935.5L400,933.8L407.5,917.5L416.2,899.5L425,901.2L432.5,901.2L440,898.8L447.5,903.2L457.5,903.8L462.5,910L467.5,919.5L472.5,920.5L477.5,916.2L479.8,910L490,902.5L497.5,908L503.8,911.2L512.5,903L520,913.8L527.5,918.2L533.8,905L540,900.5L547.5,906.2L555,918.8L562.5,931.2L567.5,934.2L575,928.8L585,925.5L592.5,926.8L601.2,931.2L607.5,928.8L615,925.5L620,927.5L625,925.5L630,924.5L637.5,910L643.8,904.5L651.2,911.2L657.5,907L662.5,908L670,902.5L677.5,913.8L683.8,915L692.5,901.2L702.5,902.5L707.5,899.5L715,897.5L722.5,901.2L730,908.8L737.5,915L745,913.8L755,927.5L762.5,927.5L771.2,917.5L777.5,922.5L785,930L795,930L802.5,936.2L811.2,940.8L817.5,937.5L825,934.5L835,935L842.5,933L852.5,928.8L861.2,920.5L866.2,922L871.2,928.2L881.2,922.5L887.5,925.5L895,936.2L905,935.5L915,933.2L925,933L932.5,934.5L940,926.8L947.5,918.8L955,915L959.8,913L968.8,925.5L975,920L981.2,903.8L991.2,899.5L997.5,901.2L1007.5,899.5L1017.5,897.5L1025,900L1038.8,905.5L1052.5,900.5L1065,906.2L1075,904.5L1085,903.8L1092.5,898.8L1100,898.8L1107.5,901.2L1117.5,915L1125,924.5L1132.5,915L1138.8,904.5L1145,906.2L1155,906.2L1163.8,921.2L1171.2,928L1180,925.5L1185,925.5L1192.5,918.8L1202.5,909.5L1211.2,903.2L1216.2,906.2L1221.2,912.5L1226.2,916.2L1233.8,910L1241.2,904.5L1247.5,906.2L1260,904.5L1265,905.5L1272.5,917.5L1277.5,921.2L1290,921.2L1298.8,910L1308.8,901.2L1313.8,903.8L1320,907.5L1327.5,912.5L1335,907.5L1341.2,901.2L1348.8,904.2L1356.2,909.5L1362.5,913.8L1367.5,915L1375,908L1380,908L1390,920L1397.5,923.2L1405,921.2L1412.5,928.8L1420,938.8L1427.5,933.8L1437.5,925.5L1445,926.2L1452.5,932.5L1457.5,937.5L1468.8,939.2L1477.5,936.8L1485,932.5L1492.5,922" fill="none" stroke="#1818f0" stroke-width="1.1" stroke-linejoin="round"/><path d="M8.8,897L22.5,906.2L35,912.5L40,912L50,906.2L57.5,912.5L66.2,918.8L77.5,918L86.2,921.2L95,930L105,934.5L115,933.8L125,931.2L132.5,926.2L140,917.5L147.5,911.2L155,911.2L162.5,907.5L170,901.2L180,900L190,901.2L200,900.8L207.5,903.8L215,910L222.5,915L227.5,910L235,905L245,906.2L255,904.2L265,901.2L275,900.8L282.5,906.2L290,913.8L300,920.5L310,926.2L317.5,918.8L325,912.5L331.2,911.2L337.5,918.8L345,927.5L352.5,931.2L360,928.2L370,929.2L380,930L387.5,933.2L397.5,934.5L405,931.2L412.5,918.8L421.2,903.8L430,901.2L440,900L450,902.5L460,904.2L467.5,911.2L473.8,917.5L479.8,917.5L492.5,903.8L505,909.5L515,905.5L528.8,915L542.5,903L551.2,906.2L560,918.8L570,932.5L580,927L590,925.8L600,928.8L610,929.2L620,926.2L628.8,926.2L637.5,917.5L646.2,906.2L655,908L660,909.5L673.8,903.8L685,912.5L693.8,906.2L702.5,903.2L713.8,898.8L721.2,898.8L730,904.2L740,912.5L747.5,914.5L757.5,922.5L765,926.2L775,918.8L782.5,922.5L790,927.5L798.8,930L807.5,936.2L816.2,939.2L825,936.2L835,935L845,932.5L855,928.2L865,921.2L872.5,925L882.5,923.8L891.2,928.2L901.2,935.8L910,934.5L920,933L930,933L937.5,932.5L945,926.2L952.5,918.8L959.8,913.8L972.5,922.5L980,915L987.5,903.8L995,900.5L1010,899.5L1022.5,898L1032.5,902L1042.5,904.2L1055,901.2L1067.5,904.5L1080,904.5L1090,901.2L1100,899.2L1107.5,899.5L1115,907.5L1122.5,916.2L1130,921.2L1137.5,915L1143.8,907.5L1150,905.5L1157.5,907.5L1166.2,917.5L1175,926.2L1185,926.2L1195,920L1205,911.2L1213.8,905L1220,906.2L1230,914.2L1237.5,911.2L1245,906.2L1255,905.5L1263.8,905.5L1271.2,912.5L1280,920L1291.2,920.8L1300,915L1310,905L1317.5,904.2L1325,908L1332.5,910.5L1340,906.2L1347.5,903.8L1356.2,908L1365,912.5L1372.5,913.8L1378.8,910L1380,907.5L1387.5,910L1397.5,920.5L1407.5,922.5L1417.5,931.2L1426.2,936.2L1435,931.2L1445,926.2L1453.8,931.2L1462.5,937.5L1471.2,938.8L1480,937.5L1487.5,933.8L1491.8,928.8" fill="none" stroke="#f01818" stroke-width="1.1" stroke-linejoin="round"/></g><text x="17" y="903" font-size="11px" fill="#3838ff" xml:space="preserve" textLength="311.5" lengthAdjust="spacingAndGlyphs">STOCHASTIC(USD/JPY, 10, 3, 3, MVA, MVA)  K: 44.46</text><text x="337.5" y="903" font-size="11px" fill="#ff2020" textLength="48.5" lengthAdjust="spacingAndGlyphs">D: 28.23</text><path d="M1854.5,895V941.5H1840M1854,895.5H1849M1854,906.5H1849M1854,918.5H1849M1854,930.5H1849" stroke="#383838" stroke-width="1" fill="none"/><rect x="1857" y="898.5" width="14" height="13" fill="#ff5050"/><text x="1857.5" y="909.9" font-size="11px" fill="#000">80</text><rect x="1857" y="890" width="21" height="12.5" fill="#989898"/><text x="1857.5" y="900.9" font-size="11px" fill="#000">100</text><rect x="1857" y="936.5" width="7" height="9" fill="#989898"/><text x="1857.5" y="943.9" font-size="11px" fill="#000">0</text><rect x="1857" y="927" width="14" height="13" fill="#ff5050"/><text x="1857.5" y="938.4" font-size="11px" fill="#000">20</text><text x="1599" y="879.3" font-size="19px" fill="#b8b8b8" font-family="'Liberation Sans',sans-serif" textLength="156.5" lengthAdjust="spacingAndGlyphs" opacity="0.85">Activate Windows</text><text x="1599" y="901" font-size="14.5px" fill="#b8b8b8" font-family="'Liberation Sans',sans-serif" textLength="234.5" lengthAdjust="spacingAndGlyphs" opacity="0.85">Go to Settings to activate Windows.</text><rect x="1496.5" y="854.5" width="95.0" height="19.200000000000045" fill="url(#lbl)" stroke="#000" stroke-width="1"/><text x="1544" y="870.3" text-anchor="middle" font-size="16.5px" class="lb" textLength="83" lengthAdjust="spacingAndGlyphs">sell if &lt;50</text><rect x="1447" y="904.5" width="38" height="17.200000000000045" fill="url(#lbl)"/><text x="1466" y="918.7" text-anchor="middle" font-size="16.5px" class="lb" textLength="27.5" lengthAdjust="spacingAndGlyphs">sell</text>
</svg>
</body></html>
